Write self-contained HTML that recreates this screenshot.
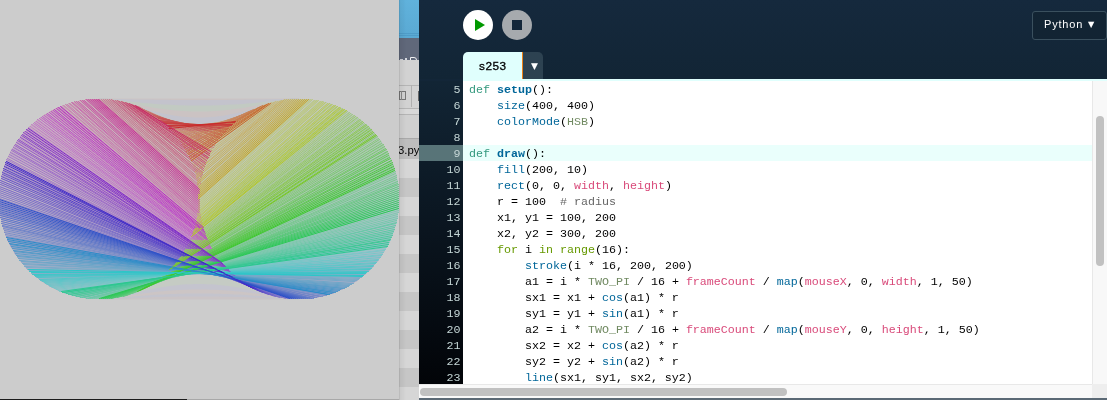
<!DOCTYPE html>
<html><head><meta charset="utf-8"><title>s253</title>
<style>
html,body{margin:0;padding:0;background:#cccccc;}
body{width:1107px;height:400px;overflow:hidden;position:relative;font-family:"Liberation Sans",sans-serif;}
#sk{position:absolute;left:0;top:0;width:399px;height:399px;background:#cccccc;overflow:hidden;}
#sk svg{position:absolute;left:0;top:0;}
#strip{position:absolute;left:399px;top:0;width:20px;height:400px;background:#cfcfcf;overflow:hidden;}
#edge{position:absolute;left:399px;top:0;width:7px;height:400px;background:linear-gradient(to right,rgba(0,0,0,.16),rgba(0,0,0,.05) 18%,rgba(0,0,0,0));}
#ed{position:absolute;left:419px;top:0;width:688px;height:400px;background:#132638;overflow:hidden;}
#hdr{position:absolute;left:0;top:0;width:688px;height:79px;background:linear-gradient(#15293d,#122535);}
.arr{position:absolute;font-family:"DejaVu Sans","Liberation Sans",sans-serif;font-size:9px;line-height:10px;color:#fff;letter-spacing:0;will-change:transform;}
.btn{position:absolute;top:10px;width:30px;height:30px;border-radius:15px;}
#tab{position:absolute;left:44px;top:52px;width:59px;height:28px;background:#e0fffd;border-radius:5px 0 0 0;color:#000;font-size:11.8px;}
#tab span{will-change:transform;position:absolute;left:15.5px;top:6.5px;line-height:14px;letter-spacing:.5px;-webkit-text-stroke:.3px #000;}
#mod{position:absolute;left:103px;top:52px;width:1px;height:27px;background:#ef8115;}
#dd{position:absolute;left:104px;top:52px;width:20px;height:27px;background:#2d4251;border-radius:0 5px 0 0;}
#tl{position:absolute;left:44px;top:79px;width:644px;height:2px;background:#e0fffd;}
#mode{position:absolute;left:613px;top:11px;width:75px;height:29px;border:1px solid #3a505e;border-radius:3px;box-sizing:border-box;color:#fff;font-size:11px;letter-spacing:.8px;background:#122433;}
#mode span{will-change:transform;position:absolute;left:11px;top:4.5px;line-height:14px;white-space:pre;}
#gut{position:absolute;left:0;top:81px;width:44px;height:303px;background:linear-gradient(#122535,#020408);overflow:hidden;}
.txt{position:absolute;left:0;top:0;width:100%;will-change:transform;}
.bgl{position:absolute;left:0;width:100%;height:16px;}
#code{position:absolute;left:44px;top:81px;width:629px;height:303px;background:#fff;overflow:hidden;}
.ln,.cl{height:16px;line-height:18px;font-family:"Liberation Mono",monospace;font-size:11.67px;white-space:pre;}
.ln{color:#c5d6d6;text-align:right;padding-right:2.5px;}

.cl{color:#000;padding-left:6px;}

.k{color:#33997e}.f4{color:#006699;font-weight:bold}.f{color:#006699}.c{color:#718a62}.v{color:#d94a7a}.g{color:#669900}.m{color:#666666}
#vs{position:absolute;left:673px;top:81px;width:15px;height:303px;background:#f8f8f8;border-left:1px solid #e8e8e8;box-sizing:border-box;}
#vt{position:absolute;left:677px;top:116px;width:8px;height:150px;border-radius:4px;background:#c1c1c1;}
#hs{position:absolute;left:0;top:384px;width:673px;height:14px;background:#f9f9f9;border-top:1px solid #e8e8e8;box-sizing:border-box;}
#ht{position:absolute;left:1px;top:388px;width:367px;height:8px;border-radius:4px;background:#c1c1c1;}
#cr{position:absolute;left:673px;top:384px;width:15px;height:14px;background:#eeeeee;}
#bot{position:absolute;left:0;top:398px;width:688px;height:2px;background:#5b6975;}
</style></head><body>
<div id="sk"><svg width="399" height="399" viewBox="0 0 399 399" fill="none" stroke-width="1" stroke-linecap="round">
<path fill="#cbc3c3" stroke="none" d="M99.0 98.5 L103.0 98.5 L107.0 98.5 L111.0 98.5 L115.0 98.5 L119.0 98.5 L123.0 98.5 L127.0 98.5 L131.0 98.5 L135.0 98.5 L139.0 98.5 L143.0 98.5 L147.0 98.5 L151.0 98.5 L155.0 98.5 L159.0 98.5 L163.0 98.5 L167.0 98.5 L171.0 98.5 L175.0 98.5 L179.0 98.5 L183.0 98.5 L187.0 98.5 L191.0 98.5 L195.0 98.5 L199.0 98.5 L203.0 98.5 L207.0 98.5 L211.0 98.5 L215.0 98.5 L219.0 98.5 L223.0 98.5 L227.0 98.5 L231.0 98.5 L235.0 98.5 L239.0 98.5 L243.0 98.5 L247.0 98.5 L251.0 98.5 L255.0 98.5 L259.0 98.5 L263.0 98.5 L267.0 98.5 L271.0 98.5 L275.0 98.5 L279.0 98.5 L283.0 98.5 L287.0 98.5 L291.0 98.5 L295.0 98.5 L299.0 98.5 L299.0 199.0 L99.0 199.0Z"/>
<path fill="#c3c3cc" stroke="none" d="M99.0 98.5 L103.0 98.6 L107.0 98.7 L111.0 98.8 L115.0 98.9 L119.0 99.0 L123.0 99.1 L127.0 99.2 L131.0 99.3 L135.0 99.4 L139.0 99.4 L143.0 99.5 L147.0 99.6 L151.0 99.6 L155.0 99.7 L159.0 99.8 L163.0 99.8 L167.0 99.8 L171.0 99.9 L175.0 99.9 L179.0 99.9 L183.0 100.0 L187.0 100.0 L191.0 100.0 L195.0 100.0 L199.0 100.0 L203.0 100.0 L207.0 100.0 L211.0 100.0 L215.0 100.0 L219.0 99.9 L223.0 99.9 L227.0 99.9 L231.0 99.8 L235.0 99.8 L239.0 99.8 L243.0 99.7 L247.0 99.6 L251.0 99.6 L255.0 99.5 L259.0 99.4 L263.0 99.4 L267.0 99.3 L271.0 99.2 L275.0 99.1 L279.0 99.0 L283.0 98.9 L287.0 98.8 L291.0 98.7 L295.0 98.6 L299.0 98.5 L299.0 199.0 L99.0 199.0Z"/>
<path fill="#c2cac2" stroke="none" d="M99.0 98.5 L103.0 98.6 L107.0 98.8 L111.0 99.2 L115.0 99.8 L119.0 100.3 L123.0 100.8 L127.0 101.2 L131.0 101.7 L135.0 102.1 L139.0 102.5 L143.0 102.9 L147.0 103.3 L151.0 103.6 L155.0 103.9 L159.0 104.2 L163.0 104.4 L167.0 104.6 L171.0 104.8 L175.0 105.0 L179.0 105.2 L183.0 105.3 L187.0 105.4 L191.0 105.4 L195.0 105.5 L199.0 105.5 L203.0 105.5 L207.0 105.4 L211.0 105.4 L215.0 105.3 L219.0 105.2 L223.0 105.0 L227.0 104.8 L231.0 104.6 L235.0 104.4 L239.0 104.2 L243.0 103.9 L247.0 103.6 L251.0 103.3 L255.0 102.9 L259.0 102.5 L263.0 102.1 L267.0 101.7 L271.0 101.2 L275.0 100.8 L279.0 100.3 L283.0 99.8 L287.0 99.2 L291.0 98.8 L295.0 98.6 L299.0 98.5 L299.0 199.0 L99.0 199.0Z"/>
<path fill="#cbc3c3" stroke="none" d="M99.0 98.5 L103.0 98.6 L107.0 98.9 L111.0 99.3 L115.0 99.8 L119.0 100.5 L123.0 101.4 L127.0 102.4 L131.0 103.3 L135.0 104.2 L139.0 105.1 L143.0 105.9 L147.0 106.6 L151.0 107.3 L155.0 108.0 L159.0 108.6 L163.0 109.1 L167.0 109.6 L171.0 110.1 L175.0 110.4 L179.0 110.8 L183.0 111.0 L187.0 111.2 L191.0 111.4 L195.0 111.5 L199.0 111.5 L203.0 111.5 L207.0 111.4 L211.0 111.2 L215.0 111.0 L219.0 110.8 L223.0 110.4 L227.0 110.1 L231.0 109.6 L235.0 109.1 L239.0 108.6 L243.0 108.0 L247.0 107.3 L251.0 106.6 L255.0 105.9 L259.0 105.1 L263.0 104.2 L267.0 103.3 L271.0 102.4 L275.0 101.4 L279.0 100.5 L283.0 99.8 L287.0 99.2 L291.0 98.9 L295.0 98.6 L299.0 98.6 L299.0 199.0 L99.0 199.0Z"/>
<path fill="#c3c3cd" stroke="none" d="M99.0 98.5 L103.0 98.7 L107.0 99.0 L111.0 99.3 L115.0 99.8 L119.0 100.6 L123.0 101.5 L127.0 102.5 L131.0 103.8 L135.0 105.2 L139.0 106.6 L143.0 107.9 L147.0 109.2 L151.0 110.4 L155.0 111.5 L159.0 112.5 L163.0 113.4 L167.0 114.3 L171.0 115.0 L175.0 115.7 L179.0 116.2 L183.0 116.7 L187.0 117.0 L191.0 117.3 L195.0 117.4 L199.0 117.5 L203.0 117.4 L207.0 117.3 L211.0 117.0 L215.0 116.7 L219.0 116.2 L223.0 115.7 L227.0 115.0 L231.0 114.3 L235.0 113.4 L239.0 112.5 L243.0 111.5 L247.0 110.4 L251.0 109.2 L255.0 107.9 L259.0 106.6 L263.0 105.2 L267.0 103.8 L271.0 102.5 L275.0 101.5 L279.0 100.6 L283.0 99.9 L287.0 99.3 L291.0 99.0 L295.0 98.7 L299.0 98.7 L299.0 199.0 L99.0 199.0Z"/>
<path fill="#cac4c6" stroke="none" d="M99.0 299.5 L103.0 299.5 L107.0 299.5 L111.0 299.5 L115.0 299.5 L119.0 299.5 L123.0 299.5 L127.0 299.5 L131.0 299.5 L135.0 299.5 L139.0 299.5 L143.0 299.5 L147.0 299.5 L151.0 299.5 L155.0 299.5 L159.0 299.5 L163.0 299.5 L167.0 299.5 L171.0 299.5 L175.0 299.5 L179.0 299.5 L183.0 299.5 L187.0 299.5 L191.0 299.5 L195.0 299.5 L199.0 299.5 L203.0 299.5 L207.0 299.5 L211.0 299.5 L215.0 299.5 L219.0 299.5 L223.0 299.5 L227.0 299.5 L231.0 299.5 L235.0 299.5 L239.0 299.5 L243.0 299.5 L247.0 299.5 L251.0 299.5 L255.0 299.5 L259.0 299.5 L263.0 299.5 L267.0 299.5 L271.0 299.5 L275.0 299.5 L279.0 299.5 L283.0 299.5 L287.0 299.5 L291.0 299.5 L295.0 299.5 L299.0 299.5 L299.0 199.0 L99.0 199.0Z"/>
<path fill="#c4c4cd" stroke="none" d="M99.0 299.5 L103.0 299.4 L107.0 299.2 L111.0 299.0 L115.0 298.8 L119.0 298.6 L123.0 298.4 L127.0 298.2 L131.0 298.0 L135.0 297.8 L139.0 297.7 L143.0 297.5 L147.0 297.4 L151.0 297.2 L155.0 297.1 L159.0 297.0 L163.0 296.9 L167.0 296.8 L171.0 296.8 L175.0 296.7 L179.0 296.6 L183.0 296.6 L187.0 296.5 L191.0 296.5 L195.0 296.5 L199.0 296.5 L203.0 296.5 L207.0 296.5 L211.0 296.5 L215.0 296.6 L219.0 296.6 L223.0 296.7 L227.0 296.8 L231.0 296.8 L235.0 296.9 L239.0 297.0 L243.0 297.1 L247.0 297.2 L251.0 297.4 L255.0 297.5 L259.0 297.7 L263.0 297.8 L267.0 298.0 L271.0 298.2 L275.0 298.4 L279.0 298.6 L283.0 298.8 L287.0 299.0 L291.0 299.2 L295.0 299.4 L299.0 299.5 L299.0 199.0 L99.0 199.0Z"/>
<path fill="#ccc5c5" stroke="none" d="M99.0 299.5 L103.0 299.4 L107.0 299.2 L111.0 298.8 L115.0 298.3 L119.0 297.9 L123.0 297.5 L127.0 297.1 L131.0 296.7 L135.0 296.3 L139.0 296.0 L143.0 295.7 L147.0 295.4 L151.0 295.1 L155.0 294.8 L159.0 294.6 L163.0 294.4 L167.0 294.2 L171.0 294.0 L175.0 293.9 L179.0 293.8 L183.0 293.7 L187.0 293.6 L191.0 293.5 L195.0 293.5 L199.0 293.5 L203.0 293.5 L207.0 293.5 L211.0 293.6 L215.0 293.7 L219.0 293.8 L223.0 293.9 L227.0 294.0 L231.0 294.2 L235.0 294.4 L239.0 294.6 L243.0 294.8 L247.0 295.1 L251.0 295.4 L255.0 295.7 L259.0 296.0 L263.0 296.3 L267.0 296.7 L271.0 297.1 L275.0 297.5 L279.0 297.9 L283.0 298.3 L287.0 298.8 L291.0 299.2 L295.0 299.4 L299.0 299.5 L299.0 199.0 L99.0 199.0Z"/>
<path fill="#c4c4ce" stroke="none" d="M99.0 299.5 L103.0 299.4 L107.0 299.2 L111.0 298.8 L115.0 298.2 L119.0 297.5 L123.0 296.7 L127.0 296.0 L131.0 295.3 L135.0 294.7 L139.0 294.1 L143.0 293.5 L147.0 293.0 L151.0 292.5 L155.0 292.0 L159.0 291.6 L163.0 291.2 L167.0 290.8 L171.0 290.5 L175.0 290.2 L179.0 290.0 L183.0 289.8 L187.0 289.7 L191.0 289.6 L195.0 289.5 L199.0 289.5 L203.0 289.5 L207.0 289.6 L211.0 289.7 L215.0 289.8 L219.0 290.0 L223.0 290.2 L227.0 290.5 L231.0 290.8 L235.0 291.2 L239.0 291.6 L243.0 292.0 L247.0 292.5 L251.0 293.0 L255.0 293.5 L259.0 294.1 L263.0 294.7 L267.0 295.3 L271.0 296.0 L275.0 296.7 L279.0 297.5 L283.0 298.2 L287.0 298.8 L291.0 299.2 L295.0 299.4 L299.0 299.5 L299.0 199.0 L99.0 199.0Z"/>
<path fill="#c5cbc4" stroke="none" d="M99.0 299.5 L103.0 299.4 L107.0 299.1 L111.0 298.8 L115.0 298.2 L119.0 297.5 L123.0 296.6 L127.0 295.5 L131.0 294.3 L135.0 293.2 L139.0 292.1 L143.0 291.1 L147.0 290.2 L151.0 289.3 L155.0 288.5 L159.0 287.7 L163.0 287.0 L167.0 286.4 L171.0 285.8 L175.0 285.4 L179.0 284.9 L183.0 284.6 L187.0 284.3 L191.0 284.2 L195.0 284.0 L199.0 284.0 L203.0 284.0 L207.0 284.2 L211.0 284.3 L215.0 284.6 L219.0 284.9 L223.0 285.4 L227.0 285.8 L231.0 286.4 L235.0 287.0 L239.0 287.7 L243.0 288.5 L247.0 289.3 L251.0 290.2 L255.0 291.1 L259.0 292.1 L263.0 293.2 L267.0 294.3 L271.0 295.5 L275.0 296.6 L279.0 297.5 L283.0 298.2 L287.0 298.7 L291.0 299.2 L295.0 299.4 L299.0 299.5 L299.0 199.0 L99.0 199.0Z"/>
<g transform="translate(-.5 -.5)">
<path stroke="#c8c0c0" d="M0 204L294 299"/>
<path stroke="#c8c0c0" d="M5 166L256 290"/>
<path stroke="#c8c0c0" d="M26 132L225 266"/>
<path stroke="#c0c8c0" d="M57 109L205 233"/>
<path stroke="#c0c8c0" d="M95 100L200 194"/>
<path stroke="#c0c8c0" d="M133 105L209 156"/>
<path stroke="#c0c8c0" d="M167 126L233 125"/>
<path stroke="#c0c8c0" d="M190 157L266 105"/>
<path stroke="#c0c6c8" d="M199 195L305 100"/>
<path stroke="#c0c0c8" d="M194 233L343 109"/>
<path stroke="#c0c0c8" d="M173 267L374 133"/>
<path stroke="#c0c0c8" d="M142 290L394 166"/>
<path stroke="#c0c0c8" d="M104 299L399 205"/>
<path stroke="#c0c0c8" d="M66 294L390 243"/>
<path stroke="#c8c0c0" d="M32 273L366 274"/>
<path stroke="#c8c0c0" d="M9 242L333 294"/>
<path stroke="#c8c0c0" d="M0 202L292 299"/>
<path stroke="#c8c0c0" d="M6 164L254 289"/>
<path stroke="#c8c0c0" d="M27 131L224 265"/>
<path stroke="#c0c8c0" d="M59 108L204 231"/>
<path stroke="#c0c8c0" d="M97 100L200 192"/>
<path stroke="#c0c8c0" d="M135 106L210 154"/>
<path stroke="#c0c8c0" d="M168 127L234 124"/>
<path stroke="#c0c8c0" d="M191 159L268 104"/>
<path stroke="#c0c6c8" d="M199 197L307 100"/>
<path stroke="#c0c0c8" d="M193 235L345 110"/>
<path stroke="#c0c0c8" d="M172 268L375 134"/>
<path stroke="#c0c0c8" d="M140 291L395 168"/>
<path stroke="#c0c0c8" d="M102 299L399 207"/>
<path stroke="#c0c0c8" d="M64 293L389 245"/>
<path stroke="#c8c0c0" d="M31 272L365 275"/>
<path stroke="#c8c0c0" d="M8 240L331 295"/>
<path stroke="#c8c0c0" d="M0 200L290 299"/>
<path stroke="#c8c0c0" d="M7 162L253 288"/>
<path stroke="#c8c0c0" d="M28 129L222 263"/>
<path stroke="#c0c8c0" d="M61 107L204 229"/>
<path stroke="#c0c8c0" d="M99 100L200 190"/>
<path stroke="#c0c8c0" d="M137 107L211 153"/>
<path stroke="#c0c8c0" d="M170 128L236 122"/>
<path stroke="#c0c8c0" d="M192 161L270 104"/>
<path stroke="#c0c6c8" d="M199 199L309 100"/>
<path stroke="#c0c0c8" d="M192 237L346 111"/>
<path stroke="#c0c0c8" d="M171 270L377 136"/>
<path stroke="#c0c0c8" d="M138 292L395 170"/>
<path stroke="#c0c0c8" d="M100 299L399 209"/>
<path stroke="#c0c0c8" d="M62 292L388 246"/>
<path stroke="#c8c0c0" d="M29 271L363 277"/>
<path stroke="#c8c0c0" d="M7 238L329 295"/>
<path stroke="#c8c0c0" d="M0 198L288 299"/>
<path stroke="#c8c0c0" d="M8 160L251 287"/>
<path stroke="#c8c0c0" d="M30 128L221 262"/>
<path stroke="#c0c8c0" d="M62 107L203 227"/>
<path stroke="#c0c8c0" d="M101 100L200 188"/>
<path stroke="#c0c8c0" d="M139 108L212 151"/>
<path stroke="#c0c8c0" d="M171 130L237 121"/>
<path stroke="#c0c8c0" d="M192 162L272 103"/>
<path stroke="#c0c6c8" d="M199 201L311 100"/>
<path stroke="#c0c0c8" d="M191 239L348 112"/>
<path stroke="#c0c0c8" d="M169 271L378 137"/>
<path stroke="#c0c0c8" d="M137 292L396 172"/>
<path stroke="#c0c0c8" d="M98 299L399 211"/>
<path stroke="#c0c0c8" d="M60 291L387 248"/>
<path stroke="#c8c0c0" d="M28 269L362 278"/>
<path stroke="#c8c0c0" d="M7 237L327 296"/>
<path stroke="#c8c0c0" d="M0 196L286 299"/>
<path stroke="#c8c0c0" d="M8 158L249 286"/>
<path stroke="#c8c0c0" d="M31 127L220 260"/>
<path stroke="#c0c8c0" d="M64 106L203 225"/>
<path stroke="#c0c8c0" d="M103 100L200 186"/>
<path stroke="#c0c8c0" d="M141 108L213 149"/>
<path stroke="#c0c8c0" d="M172 131L239 120"/>
<path stroke="#c0c8c0" d="M193 164L274 103"/>
<path stroke="#c0c6c8" d="M199 203L313 100"/>
<path stroke="#c0c0c8" d="M191 241L350 113"/>
<path stroke="#c0c0c8" d="M168 272L379 139"/>
<path stroke="#c0c0c8" d="M135 293L396 174"/>
<path stroke="#c0c0c8" d="M96 299L399 213"/>
<path stroke="#c0c0c8" d="M58 291L386 250"/>
<path stroke="#c8c0c0" d="M27 268L360 279"/>
<path stroke="#c8c0c0" d="M6 235L325 296"/>
<path stroke="#c8c0c0" d="M0 194L284 298"/>
<path stroke="#c8c0c0" d="M9 156L247 285"/>
<path stroke="#c8c0c0" d="M33 125L219 258"/>
<path stroke="#c0c8c0" d="M66 105L202 223"/>
<path stroke="#c0c8c0" d="M105 100L201 184"/>
<path stroke="#c0c8c0" d="M143 109L214 147"/>
<path stroke="#c0c8c0" d="M174 133L241 119"/>
<path stroke="#c0c8c0" d="M194 166L276 102"/>
<path stroke="#c0c6c8" d="M199 205L315 101"/>
<path stroke="#c0c0c8" d="M190 243L352 114"/>
<path stroke="#c0c0c8" d="M166 274L380 141"/>
<path stroke="#c0c0c8" d="M133 294L397 176"/>
<path stroke="#c0c0c8" d="M94 299L398 215"/>
<path stroke="#c0c0c8" d="M56 290L385 252"/>
<path stroke="#c8c0c0" d="M25 266L358 280"/>
<path stroke="#c8c0c0" d="M5 233L323 297"/>
<path stroke="#c8c0c0" d="M0 192L282 298"/>
<path stroke="#c8c0c0" d="M10 155L246 284"/>
<path stroke="#c8c0c0" d="M34 124L218 257"/>
<path stroke="#c0c8c0" d="M68 105L202 221"/>
<path stroke="#c0c8c0" d="M107 100L201 182"/>
<path stroke="#c0c8c0" d="M144 110L215 146"/>
<path stroke="#c0c8c0" d="M175 134L242 118"/>
<path stroke="#c0c8c0" d="M194 168L278 102"/>
<path stroke="#c0c6c8" d="M199 207L317 101"/>
<path stroke="#c0c0c8" d="M189 244L353 115"/>
<path stroke="#c0c0c8" d="M165 275L381 142"/>
<path stroke="#c0c0c8" d="M131 294L397 178"/>
<path stroke="#c0c0c8" d="M92 299L398 217"/>
<path stroke="#c0c0c8" d="M55 289L384 253"/>
<path stroke="#c8c0c0" d="M24 265L357 281"/>
<path stroke="#c8c0c0" d="M5 231L321 297"/>
<path stroke="#c8c0c0" d="M0 190L280 298"/>
<path stroke="#c8c0c0" d="M11 153L244 283"/>
<path stroke="#c8c0c0" d="M36 123L216 255"/>
<path stroke="#c0c8c0" d="M70 104L201 219"/>
<path stroke="#c0c8c0" d="M109 100L201 180"/>
<path stroke="#c0c8c0" d="M146 111L216 144"/>
<path stroke="#c0c8c0" d="M176 136L244 116"/>
<path stroke="#c0c8c0" d="M195 170L280 101"/>
<path stroke="#c0c6c8" d="M199 209L319 101"/>
<path stroke="#c0c0c8" d="M188 246L355 116"/>
<path stroke="#c0c0c8" d="M163 276L383 144"/>
<path stroke="#c0c0c8" d="M129 295L398 180"/>
<path stroke="#c0c0c8" d="M90 299L398 219"/>
<path stroke="#c0c0c8" d="M53 288L383 255"/>
<path stroke="#c8c0c0" d="M23 263L355 283"/>
<path stroke="#c8c0c0" d="M4 229L319 298"/>
<path stroke="#c8c0c0" d="M0 188L278 297"/>
<path stroke="#c8c0c0" d="M12 151L242 282"/>
<path stroke="#c8c0c0" d="M37 121L215 253"/>
<path stroke="#c0c8c0" d="M72 103L201 217"/>
<path stroke="#c0c8c0" d="M111 100L202 178"/>
<path stroke="#c0c8c0" d="M148 112L217 142"/>
<path stroke="#c0c8c0" d="M178 137L246 115"/>
<path stroke="#c0c8c0" d="M196 172L282 101"/>
<path stroke="#c0c6c8" d="M199 211L321 102"/>
<path stroke="#c0c0c8" d="M187 248L357 117"/>
<path stroke="#c0c0c8" d="M162 278L384 146"/>
<path stroke="#c0c0c8" d="M127 296L398 182"/>
<path stroke="#c0c0c8" d="M88 299L397 221"/>
<path stroke="#c0c0c8" d="M51 287L382 257"/>
<path stroke="#c8c0c0" d="M21 262L353 284"/>
<path stroke="#c8c0c0" d="M3 227L317 298"/>
<path stroke="#c8c0c0" d="M0 186L276 297"/>
<path stroke="#c8c0c0" d="M13 149L241 280"/>
<path stroke="#c8c0c0" d="M39 120L214 252"/>
<path stroke="#c0c8c0" d="M74 103L201 215"/>
<path stroke="#c0c8c0" d="M113 100L202 176"/>
<path stroke="#c0c8c0" d="M150 113L219 141"/>
<path stroke="#c0c8c0" d="M179 139L247 114"/>
<path stroke="#c0c8c0" d="M196 174L284 101"/>
<path stroke="#c0c6c8" d="M199 213L323 102"/>
<path stroke="#c0c0c8" d="M186 250L358 119"/>
<path stroke="#c0c0c8" d="M160 279L385 147"/>
<path stroke="#c0c0c8" d="M125 296L398 184"/>
<path stroke="#c0c0c8" d="M86 299L397 223"/>
<path stroke="#c0c0c8" d="M49 286L380 258"/>
<path stroke="#c8c0c0" d="M20 260L352 285"/>
<path stroke="#c8c0c0" d="M3 225L315 298"/>
<path stroke="#c8c0c0" d="M1 184L274 296"/>
<path stroke="#c8c0c0" d="M14 148L239 279"/>
<path stroke="#c8c0c0" d="M40 119L213 250"/>
<path stroke="#c0c8c0" d="M76 102L200 213"/>
<path stroke="#c0c8c0" d="M115 101L203 174"/>
<path stroke="#c0c8c0" d="M151 114L220 139"/>
<path stroke="#c0c8c0" d="M180 140L249 113"/>
<path stroke="#c0c8c0" d="M197 176L286 100"/>
<path stroke="#c0c6c8" d="M198 215L325 103"/>
<path stroke="#c0c0c8" d="M185 251L360 120"/>
<path stroke="#c0c0c8" d="M159 280L386 149"/>
<path stroke="#c0c0c8" d="M123 297L399 186"/>
<path stroke="#c0c0c8" d="M84 298L396 225"/>
<path stroke="#c0c0c8" d="M48 285L379 260"/>
<path stroke="#c8c0c0" d="M19 259L350 286"/>
<path stroke="#c8c0c0" d="M2 223L313 299"/>
<path stroke="#c8c0c0" d="M1 182L272 296"/>
<path stroke="#c8c0c0" d="M15 146L238 278"/>
<path stroke="#c8c0c0" d="M42 118L212 248"/>
<path stroke="#c0c8c0" d="M78 102L200 211"/>
<path stroke="#c0c8c0" d="M117 101L203 172"/>
<path stroke="#c0c8c0" d="M153 115L221 138"/>
<path stroke="#c0c8c0" d="M181 142L251 112"/>
<path stroke="#c0c8c0" d="M197 178L288 100"/>
<path stroke="#c0c6c8" d="M198 217L327 103"/>
<path stroke="#c0c0c8" d="M184 253L361 121"/>
<path stroke="#c0c0c8" d="M157 281L387 151"/>
<path stroke="#c0c0c8" d="M121 297L399 188"/>
<path stroke="#c0c0c8" d="M82 298L396 227"/>
<path stroke="#c0c0c8" d="M46 284L378 261"/>
<path stroke="#c8c0c0" d="M18 257L348 287"/>
<path stroke="#c8c0c0" d="M2 221L311 299"/>
<path stroke="#c8c0c0" d="M1 180L270 295"/>
<path stroke="#c8c0c0" d="M16 144L236 277"/>
<path stroke="#c8c0c0" d="M44 117L211 247"/>
<path stroke="#c0c8c0" d="M80 101L200 209"/>
<path stroke="#c0c8c0" d="M119 101L204 170"/>
<path stroke="#c0c8c0" d="M155 116L222 136"/>
<path stroke="#c0c8c0" d="M182 144L252 111"/>
<path stroke="#c0c8c0" d="M198 180L290 100"/>
<path stroke="#c0c6c8" d="M198 219L329 104"/>
<path stroke="#c0c0c8" d="M183 255L363 122"/>
<path stroke="#c0c0c8" d="M155 282L388 152"/>
<path stroke="#c0c0c8" d="M119 298L399 190"/>
<path stroke="#c0c0c8" d="M80 298L395 229"/>
<path stroke="#c0c0c8" d="M44 283L377 263"/>
<path stroke="#c8c0c0" d="M17 255L347 288"/>
<path stroke="#c8c0c0" d="M1 219L309 299"/>
<path stroke="#c8c0c0" d="M2 178L268 295"/>
<path stroke="#c8c0c0" d="M17 143L234 275"/>
<path stroke="#c8c0c0" d="M45 115L210 245"/>
<path stroke="#c0c8c0" d="M82 101L200 207"/>
<path stroke="#c0c8c0" d="M121 102L204 168"/>
<path stroke="#c0c8c0" d="M156 117L224 134"/>
<path stroke="#c0c8c0" d="M184 145L254 110"/>
<path stroke="#c0c8c0" d="M198 182L292 100"/>
<path stroke="#c0c6c8" d="M197 221L331 104"/>
<path stroke="#c0c0c8" d="M182 256L365 124"/>
<path stroke="#c0c0c8" d="M154 284L389 154"/>
<path stroke="#c0c0c8" d="M117 298L399 192"/>
<path stroke="#c0c0c8" d="M78 297L395 231"/>
<path stroke="#c0c0c8" d="M43 282L375 265"/>
<path stroke="#c8c0c0" d="M15 254L345 289"/>
<path stroke="#c8c0c0" d="M1 217L307 299"/>
<path stroke="#c8c0c0" d="M2 176L267 294"/>
<path stroke="#c8c0c0" d="M18 141L233 274"/>
<path stroke="#c8c0c0" d="M47 114L209 243"/>
<path stroke="#c0c8c0" d="M84 101L200 205"/>
<path stroke="#c0c8c0" d="M123 102L205 167"/>
<path stroke="#c0c8c0" d="M158 118L225 133"/>
<path stroke="#c0c8c0" d="M185 147L256 109"/>
<path stroke="#c0c8c0" d="M198 184L294 100"/>
<path stroke="#c0c6c8" d="M197 223L332 105"/>
<path stroke="#c0c0c8" d="M181 258L366 125"/>
<path stroke="#c0c0c8" d="M152 285L390 156"/>
<path stroke="#c0c0c8" d="M115 298L399 194"/>
<path stroke="#c0c0c8" d="M76 297L394 232"/>
<path stroke="#c0c0c8" d="M41 281L374 266"/>
<path stroke="#c8c0c0" d="M14 252L343 290"/>
<path stroke="#c8c0c0" d="M1 215L305 299"/>
<path stroke="#c8c0c0" d="M3 174L265 293"/>
<path stroke="#c8c0c0" d="M20 139L231 273"/>
<path stroke="#c8c0c0" d="M49 113L209 241"/>
<path stroke="#c0c8c0" d="M86 100L200 203"/>
<path stroke="#c0c8c0" d="M125 103L206 165"/>
<path stroke="#c0c8c0" d="M160 120L226 131"/>
<path stroke="#c0c8c0" d="M186 149L258 109"/>
<path stroke="#c0c8c0" d="M199 186L296 100"/>
<path stroke="#c0c6c8" d="M196 225L334 106"/>
<path stroke="#c0c0c8" d="M179 260L368 126"/>
<path stroke="#c0c0c8" d="M150 286L390 158"/>
<path stroke="#c0c0c8" d="M113 299L399 196"/>
<path stroke="#c0c0c8" d="M74 296L393 234"/>
<path stroke="#c0c0c8" d="M39 279L373 268"/>
<path stroke="#c8c0c0" d="M13 250L341 290"/>
<path stroke="#c8c0c0" d="M0 213L303 299"/>
<path stroke="#c8c0c0" d="M3 173L263 293"/>
<path stroke="#c8c0c0" d="M21 138L230 271"/>
<path stroke="#c8c0c0" d="M50 112L208 239"/>
<path stroke="#c0c8c0" d="M88 100L200 201"/>
<path stroke="#c0c8c0" d="M126 103L206 163"/>
<path stroke="#c0c8c0" d="M161 121L228 130"/>
<path stroke="#c0c8c0" d="M187 150L260 108"/>
<path stroke="#c0c8c0" d="M199 188L298 100"/>
<path stroke="#c0c6c8" d="M196 226L336 106"/>
<path stroke="#c0c0c8" d="M178 261L369 128"/>
<path stroke="#c0c0c8" d="M149 287L391 160"/>
<path stroke="#c0c0c8" d="M111 299L399 198"/>
<path stroke="#c0c0c8" d="M73 296L393 236"/>
<path stroke="#c0c0c8" d="M38 278L371 269"/>
<path stroke="#c8c0c0" d="M12 249L339 291"/>
<path stroke="#c8c0c0" d="M0 211L301 299"/>
<path stroke="#c8c0c0" d="M4 171L261 292"/>
<path stroke="#c8c0c0" d="M22 136L229 270"/>
<path stroke="#c8c0c0" d="M52 111L207 237"/>
<path stroke="#c0c8c0" d="M90 100L200 199"/>
<path stroke="#c0c8c0" d="M128 104L207 161"/>
<path stroke="#c0c8c0" d="M163 122L229 129"/>
<path stroke="#c0c8c0" d="M188 152L262 107"/>
<path stroke="#c0c8c0" d="M199 190L300 100"/>
<path stroke="#c0c6c8" d="M195 228L338 107"/>
<path stroke="#c0c0c8" d="M177 263L370 129"/>
<path stroke="#c0c0c8" d="M147 288L392 162"/>
<path stroke="#c0c0c8" d="M109 299L399 200"/>
<path stroke="#c0c0c8" d="M71 295L392 238"/>
<path stroke="#c0c0c8" d="M36 277L370 270"/>
<path stroke="#c8c0c0" d="M11 247L337 292"/>
<path stroke="#c8c0c0" d="M0 209L299 299"/>
<path stroke="#c8c0c0" d="M4 169L259 291"/>
<path stroke="#c8c0c0" d="M23 135L227 269"/>
<path stroke="#c8c0c0" d="M54 110L206 236"/>
<path stroke="#c0c8c0" d="M92 100L200 197"/>
<path stroke="#c0c8c0" d="M130 104L208 159"/>
<path stroke="#c0c8c0" d="M164 123L230 127"/>
<path stroke="#c0c8c0" d="M189 154L263 106"/>
<path stroke="#c0c8c0" d="M199 192L302 100"/>
<path stroke="#c0c6c8" d="M195 230L340 108"/>
<path stroke="#c0c0c8" d="M176 264L372 130"/>
<path stroke="#c0c0c8" d="M145 289L393 163"/>
<path stroke="#c0c0c8" d="M107 299L399 202"/>
<path stroke="#c0c0c8" d="M69 295L391 240"/>
<path stroke="#c0c0c8" d="M35 276L369 272"/>
<path stroke="#c8c0c0" d="M10 245L336 293"/>
<path stroke="#c8c0c0" d="M0 207L297 299"/>
<path stroke="#c8c0c0" d="M5 167L257 290"/>
<path stroke="#c8c0c0" d="M25 133L226 267"/>
<path stroke="#c8c0c0" d="M56 110L206 234"/>
<path stroke="#c0c8c0" d="M94 100L200 195"/>
<path stroke="#c0c8c0" d="M132 105L209 157"/>
<path stroke="#c0c8c0" d="M166 125L232 126"/>
<path stroke="#c0c8c0" d="M189 156L265 106"/>
<path stroke="#c0c8c0" d="M199 194L304 100"/>
<path stroke="#c0c6c8" d="M194 232L342 109"/>
<path stroke="#c0c0c8" d="M174 266L373 132"/>
<path stroke="#c0c0c8" d="M143 289L393 165"/>
<path stroke="#c0c0c8" d="M105 299L399 204"/>
<path stroke="#c0c0c8" d="M67 294L390 242"/>
<path stroke="#c0c0c8" d="M33 274L367 273"/>
<path stroke="#c8c0c0" d="M10 243L334 293"/>
<path stroke="#c8c0c0" d="M0 205L295 299"/>
<path stroke="#c8c0c0" d="M6 165L255 289"/>
<path stroke="#c8c0c0" d="M26 132L224 266"/>
<path stroke="#c8c0c0" d="M58 109L205 232"/>
<path stroke="#c0c8c0" d="M96 100L200 193"/>
<path stroke="#c0c8c0" d="M134 106L210 155"/>
<path stroke="#c0c8c0" d="M167 126L233 124"/>
<path stroke="#c0c8c0" d="M190 158L267 105"/>
<path stroke="#c0c8c0" d="M199 196L306 100"/>
<path stroke="#c0c6c8" d="M193 234L344 110"/>
<path stroke="#c0c0c8" d="M173 267L375 133"/>
<path stroke="#c0c0c8" d="M141 290L394 167"/>
<path stroke="#c0c0c8" d="M103 299L399 206"/>
<path stroke="#c0c0c8" d="M65 293L389 244"/>
<path stroke="#c0c0c8" d="M32 273L366 275"/>
<path stroke="#c8c0c0" d="M9 241L332 294"/>
<path stroke="#c8c0c0" d="M0 203L293 299"/>
<path stroke="#c8c0c0" d="M6 163L254 288"/>
<path stroke="#c8c0c0" d="M27 130L223 264"/>
<path stroke="#c8c0c0" d="M59 108L204 230"/>
<path stroke="#c0c8c0" d="M98 100L200 191"/>
<path stroke="#c0c8c0" d="M136 106L211 154"/>
<path stroke="#c0c8c0" d="M169 127L235 123"/>
<path stroke="#c0c8c0" d="M191 159L269 104"/>
<path stroke="#c0c8c0" d="M199 198L308 100"/>
<path stroke="#c0c6c8" d="M193 236L345 111"/>
<path stroke="#c0c0c8" d="M172 269L376 135"/>
<path stroke="#c0c0c8" d="M140 291L395 169"/>
<path stroke="#c0c0c8" d="M101 299L399 208"/>
<path stroke="#c0c0c8" d="M63 293L388 245"/>
<path stroke="#c0c0c8" d="M30 272L364 276"/>
<path stroke="#c8c0c0" d="M8 240L330 295"/>
<path stroke="#c8c0c0" d="M0 201L291 299"/>
<path stroke="#c8c0c0" d="M7 161L252 287"/>
<path stroke="#c8c0c0" d="M29 129L222 263"/>
<path stroke="#c8c0c0" d="M61 107L204 228"/>
<path stroke="#c0c8c0" d="M100 100L200 189"/>
<path stroke="#c0c8c0" d="M138 107L212 152"/>
<path stroke="#c0c8c0" d="M170 129L236 122"/>
<path stroke="#c0c8c0" d="M192 161L271 104"/>
<path stroke="#c0c8c0" d="M199 200L310 100"/>
<path stroke="#c0c6c8" d="M192 238L347 112"/>
<path stroke="#c0c0c8" d="M170 270L377 136"/>
<path stroke="#c0c0c8" d="M138 292L395 171"/>
<path stroke="#c0c0c8" d="M99 299L399 210"/>
<path stroke="#c0c0c8" d="M61 292L387 247"/>
<path stroke="#c0c0c8" d="M29 270L363 277"/>
<path stroke="#c8c0c0" d="M7 238L328 295"/>
<path stroke="#c8c0c0" d="M0 199L289 299"/>
<path stroke="#c8c0c0" d="M8 159L250 286"/>
<path stroke="#c8c0c0" d="M30 127L221 261"/>
<path stroke="#c8c0c0" d="M63 106L203 226"/>
<path stroke="#c0c8c0" d="M102 100L200 187"/>
<path stroke="#c0c8c0" d="M140 108L213 150"/>
<path stroke="#c0c8c0" d="M172 130L238 121"/>
<path stroke="#c0c8c0" d="M193 163L273 103"/>
<path stroke="#c0c8c0" d="M199 202L312 100"/>
<path stroke="#c0c6c8" d="M191 240L349 113"/>
<path stroke="#c0c0c8" d="M169 272L378 138"/>
<path stroke="#c0c0c8" d="M136 293L396 173"/>
<path stroke="#c0c0c8" d="M97 299L399 212"/>
<path stroke="#c0c0c8" d="M59 291L386 249"/>
<path stroke="#c0c0c8" d="M27 269L361 278"/>
<path stroke="#c8c0c0" d="M6 236L326 296"/>
<path stroke="#c8c0c0" d="M0 197L287 299"/>
<path stroke="#c8c0c0" d="M9 158L248 285"/>
<path stroke="#c8c0c0" d="M32 126L219 259"/>
<path stroke="#c8c0c0" d="M65 106L203 224"/>
<path stroke="#c0c8c0" d="M103 100L201 185"/>
<path stroke="#c0c8c0" d="M141 109L214 148"/>
<path stroke="#c0c8c0" d="M173 132L240 119"/>
<path stroke="#c0c8c0" d="M193 165L275 103"/>
<path stroke="#c0c8c0" d="M199 203L314 101"/>
<path stroke="#c0c6c8" d="M190 241L351 114"/>
<path stroke="#c0c0c8" d="M167 273L380 140"/>
<path stroke="#c0c0c8" d="M134 293L396 175"/>
<path stroke="#c0c0c8" d="M96 299L398 214"/>
<path stroke="#c0c0c8" d="M58 290L385 251"/>
<path stroke="#c0c0c8" d="M26 267L359 280"/>
<path stroke="#c8c0c0" d="M6 234L324 296"/>
<path stroke="#c8c0c0" d="M0 196L285 298"/>
<path stroke="#c8c0c0" d="M10 156L247 284"/>
<path stroke="#c8c0c0" d="M33 125L218 258"/>
<path stroke="#c8c0c0" d="M67 105L202 222"/>
<path stroke="#c0c8c0" d="M105 100L201 183"/>
<path stroke="#c0c8c0" d="M143 110L215 147"/>
<path stroke="#c0c8c0" d="M174 133L241 118"/>
<path stroke="#c0c8c0" d="M194 167L277 102"/>
<path stroke="#c0c8c0" d="M199 205L316 101"/>
<path stroke="#c0c6c8" d="M189 243L352 115"/>
<path stroke="#c0c0c8" d="M166 274L381 141"/>
<path stroke="#c0c0c8" d="M132 294L397 177"/>
<path stroke="#c0c0c8" d="M94 299L398 216"/>
<path stroke="#c0c0c8" d="M56 289L384 252"/>
<path stroke="#c0c0c8" d="M25 266L358 281"/>
<path stroke="#c8c0c0" d="M5 232L322 297"/>
<path stroke="#c8c0c0" d="M0 194L283 298"/>
<path stroke="#c8c0c0" d="M10 154L245 283"/>
<path stroke="#c8c0c0" d="M35 123L217 256"/>
<path stroke="#c8c0c0" d="M69 104L202 220"/>
<path stroke="#c0c8c0" d="M107 100L201 181"/>
<path stroke="#c0c8c0" d="M145 110L216 145"/>
<path stroke="#c0c8c0" d="M176 135L243 117"/>
<path stroke="#c0c8c0" d="M195 169L279 102"/>
<path stroke="#c0c8c0" d="M199 207L318 101"/>
<path stroke="#c0c6c8" d="M189 245L354 116"/>
<path stroke="#c0c0c8" d="M164 276L382 143"/>
<path stroke="#c0c0c8" d="M130 295L397 179"/>
<path stroke="#c0c0c8" d="M92 299L398 218"/>
<path stroke="#c0c0c8" d="M54 289L383 254"/>
<path stroke="#c0c0c8" d="M23 264L356 282"/>
<path stroke="#c8c0c0" d="M4 230L320 297"/>
<path stroke="#c8c0c0" d="M0 192L281 298"/>
<path stroke="#c8c0c0" d="M11 152L243 282"/>
<path stroke="#c8c0c0" d="M36 122L216 255"/>
<path stroke="#c8c0c0" d="M71 104L201 218"/>
<path stroke="#c0c8c0" d="M109 100L202 179"/>
<path stroke="#c0c8c0" d="M147 111L217 143"/>
<path stroke="#c0c8c0" d="M177 136L244 116"/>
<path stroke="#c0c8c0" d="M195 171L281 101"/>
<path stroke="#c0c8c0" d="M199 209L320 102"/>
<path stroke="#c0c6c8" d="M188 247L356 117"/>
<path stroke="#c0c0c8" d="M163 277L383 144"/>
<path stroke="#c0c0c8" d="M128 295L398 181"/>
<path stroke="#c0c0c8" d="M90 299L397 220"/>
<path stroke="#c0c0c8" d="M52 288L382 256"/>
<path stroke="#c0c0c8" d="M22 263L355 283"/>
<path stroke="#c8c0c0" d="M4 228L318 298"/>
<path stroke="#c8c0c0" d="M0 190L279 297"/>
<path stroke="#c8c0c0" d="M12 150L242 281"/>
<path stroke="#c8c0c0" d="M38 121L215 253"/>
<path stroke="#c8c0c0" d="M73 103L201 216"/>
<path stroke="#c0c8c0" d="M111 100L202 177"/>
<path stroke="#c0c8c0" d="M149 112L218 142"/>
<path stroke="#c0c8c0" d="M178 138L246 115"/>
<path stroke="#c0c8c0" d="M196 173L283 101"/>
<path stroke="#c0c8c0" d="M199 211L322 102"/>
<path stroke="#c0c6c8" d="M187 249L357 118"/>
<path stroke="#c0c0c8" d="M161 278L384 146"/>
<path stroke="#c0c0c8" d="M126 296L398 183"/>
<path stroke="#c0c0c8" d="M88 299L397 222"/>
<path stroke="#c0c0c8" d="M50 287L381 257"/>
<path stroke="#c0c0c8" d="M21 261L353 284"/>
<path stroke="#c8c0c0" d="M3 226L316 298"/>
<path stroke="#c8c0c0" d="M0 188L277 297"/>
<path stroke="#c8c0c0" d="M13 149L240 280"/>
<path stroke="#c8c0c0" d="M39 120L214 251"/>
<path stroke="#c8c0c0" d="M74 103L201 214"/>
<path stroke="#c0c8c0" d="M113 100L202 175"/>
<path stroke="#c0c8c0" d="M150 113L219 140"/>
<path stroke="#c0c8c0" d="M179 139L248 114"/>
<path stroke="#c0c8c0" d="M196 174L285 101"/>
<path stroke="#c0c8c0" d="M199 213L324 102"/>
<path stroke="#c0c6c8" d="M186 250L359 119"/>
<path stroke="#c0c0c8" d="M160 279L385 148"/>
<path stroke="#c0c0c8" d="M125 296L398 185"/>
<path stroke="#c0c0c8" d="M86 299L397 224"/>
<path stroke="#c0c0c8" d="M49 286L380 259"/>
<path stroke="#c0c0c8" d="M20 260L351 285"/>
<path stroke="#c8c0c0" d="M3 225L314 298"/>
<path stroke="#c8c0c0" d="M0 186L275 297"/>
<path stroke="#c8c0c0" d="M14 147L239 279"/>
<path stroke="#c8c0c0" d="M41 118L213 249"/>
<path stroke="#c8c0c0" d="M76 102L200 212"/>
<path stroke="#c0c8c0" d="M115 101L203 174"/>
<path stroke="#c0c8c0" d="M152 114L220 139"/>
<path stroke="#c0c8c0" d="M181 141L250 113"/>
<path stroke="#c0c8c0" d="M197 176L287 100"/>
<path stroke="#c0c8c0" d="M198 215L325 103"/>
<path stroke="#c0c6c8" d="M185 252L360 120"/>
<path stroke="#c0c0c8" d="M158 281L386 150"/>
<path stroke="#c0c0c8" d="M123 297L399 187"/>
<path stroke="#c0c0c8" d="M84 298L396 225"/>
<path stroke="#c0c0c8" d="M47 285L379 260"/>
<path stroke="#c0c0c8" d="M18 258L349 286"/>
<path stroke="#c8c0c0" d="M2 223L312 299"/>
<path stroke="#c8c0c0" d="M1 184L274 296"/>
<path stroke="#c8c0c0" d="M15 145L237 278"/>
<path stroke="#c8c0c0" d="M43 117L212 248"/>
<path stroke="#c8c0c0" d="M78 102L200 210"/>
<path stroke="#c0c8c0" d="M117 101L203 172"/>
<path stroke="#c0c8c0" d="M154 115L221 137"/>
<path stroke="#c0c8c0" d="M182 143L251 112"/>
<path stroke="#c0c8c0" d="M197 178L289 100"/>
<path stroke="#c0c8c0" d="M198 217L327 103"/>
<path stroke="#c0c6c8" d="M184 254L362 121"/>
<path stroke="#c0c0c8" d="M156 282L387 151"/>
<path stroke="#c0c0c8" d="M121 297L399 189"/>
<path stroke="#c0c0c8" d="M82 298L396 227"/>
<path stroke="#c0c0c8" d="M45 284L378 262"/>
<path stroke="#c0c0c8" d="M17 256L348 287"/>
<path stroke="#c8c0c0" d="M2 221L310 299"/>
<path stroke="#c8c0c0" d="M1 182L272 296"/>
<path stroke="#c8c0c0" d="M17 144L235 276"/>
<path stroke="#c8c0c0" d="M44 116L211 246"/>
<path stroke="#c8c0c0" d="M80 101L200 208"/>
<path stroke="#c0c8c0" d="M119 101L204 170"/>
<path stroke="#c0c8c0" d="M155 117L223 135"/>
<path stroke="#c0c8c0" d="M183 144L253 111"/>
<path stroke="#c0c8c0" d="M198 180L291 100"/>
<path stroke="#c0c8c0" d="M198 219L329 104"/>
<path stroke="#c0c6c8" d="M182 255L364 123"/>
<path stroke="#c0c0c8" d="M155 283L388 153"/>
<path stroke="#c0c0c8" d="M119 298L399 191"/>
<path stroke="#c0c0c8" d="M80 298L395 229"/>
<path stroke="#c0c0c8" d="M44 282L376 264"/>
<path stroke="#c0c0c8" d="M16 255L346 288"/>
<path stroke="#c8c0c0" d="M1 219L308 299"/>
<path stroke="#c8c0c0" d="M1 180L270 295"/>
<path stroke="#c8c0c0" d="M18 142L234 275"/>
<path stroke="#c8c0c0" d="M46 115L210 244"/>
<path stroke="#c8c0c0" d="M82 101L200 206"/>
<path stroke="#c0c8c0" d="M121 102L205 168"/>
<path stroke="#c0c8c0" d="M157 118L224 134"/>
<path stroke="#c0c8c0" d="M184 146L255 110"/>
<path stroke="#c0c8c0" d="M198 182L293 100"/>
<path stroke="#c0c8c0" d="M197 221L331 105"/>
<path stroke="#c0c6c8" d="M181 257L365 124"/>
<path stroke="#c0c0c8" d="M153 284L389 155"/>
<path stroke="#c0c0c8" d="M117 298L399 193"/>
<path stroke="#c0c0c8" d="M78 297L394 231"/>
<path stroke="#c0c0c8" d="M42 281L375 265"/>
<path stroke="#c0c0c8" d="M15 253L344 289"/>
<path stroke="#c8c0c0" d="M1 217L306 299"/>
<path stroke="#c8c0c0" d="M2 178L268 294"/>
<path stroke="#c8c0c0" d="M19 140L232 274"/>
<path stroke="#c8c0c0" d="M48 114L209 242"/>
<path stroke="#c8c0c0" d="M84 101L200 204"/>
<path stroke="#c0c8c0" d="M123 102L205 166"/>
<path stroke="#c0c8c0" d="M159 119L225 132"/>
<path stroke="#c0c8c0" d="M185 148L257 109"/>
<path stroke="#c0c8c0" d="M198 184L295 100"/>
<path stroke="#c0c8c0" d="M197 223L333 105"/>
<path stroke="#c0c6c8" d="M180 259L367 125"/>
<path stroke="#c0c0c8" d="M151 285L390 157"/>
<path stroke="#c0c0c8" d="M115 298L399 195"/>
<path stroke="#c0c0c8" d="M76 297L394 233"/>
<path stroke="#c0c0c8" d="M40 280L374 267"/>
<path stroke="#c0c0c8" d="M14 251L342 290"/>
<path stroke="#c8c0c0" d="M1 215L304 299"/>
<path stroke="#c8c0c0" d="M2 176L266 294"/>
<path stroke="#c8c0c0" d="M20 139L231 272"/>
<path stroke="#c8c0c0" d="M49 113L208 240"/>
<path stroke="#c8c0c0" d="M86 100L200 202"/>
<path stroke="#c0c8c0" d="M125 103L206 164"/>
<path stroke="#c0c8c0" d="M160 120L227 131"/>
<path stroke="#c0c8c0" d="M186 149L259 108"/>
<path stroke="#c0c8c0" d="M199 186L297 100"/>
<path stroke="#c0c8c0" d="M196 225L335 106"/>
<path stroke="#c0c6c8" d="M179 260L368 127"/>
<path stroke="#c0c0c8" d="M150 286L391 159"/>
<path stroke="#c0c0c8" d="M113 299L399 197"/>
<path stroke="#c0c0c8" d="M74 296L393 235"/>
<path stroke="#c0c0c8" d="M39 279L372 268"/>
<path stroke="#c0c0c8" d="M13 250L340 291"/>
<path stroke="#c8c0c0" d="M0 213L302 299"/>
<path stroke="#c8c0c0" d="M3 174L264 293"/>
<path stroke="#c8c0c0" d="M21 137L229 271"/>
<path stroke="#c8c0c0" d="M51 112L207 239"/>
<path stroke="#c8c0c0" d="M88 100L200 200"/>
<path stroke="#c0c8c0" d="M127 103L207 162"/>
<path stroke="#c0c8c0" d="M162 121L228 129"/>
<path stroke="#c0c8c0" d="M187 151L260 107"/>
<path stroke="#c0c8c0" d="M199 188L299 100"/>
<path stroke="#c0c8c0" d="M196 227L337 107"/>
<path stroke="#c0c6c8" d="M178 262L370 128"/>
<path stroke="#c0c0c8" d="M148 287L392 160"/>
<path stroke="#c0c0c8" d="M111 299L399 199"/>
<path stroke="#c0c0c8" d="M72 296L392 237"/>
<path stroke="#c0c0c8" d="M37 278L371 270"/>
<path stroke="#c0c0c8" d="M12 248L339 292"/>
<path stroke="#c8c0c0" d="M0 211L300 299"/>
<path stroke="#c8c0c0" d="M3 172L262 292"/>
<path stroke="#c8c0c0" d="M23 136L228 269"/>
<path stroke="#c8c0c0" d="M53 111L207 237"/>
<path stroke="#c8c0c0" d="M90 100L200 198"/>
<path stroke="#c0c8c0" d="M129 104L208 160"/>
<path stroke="#c0c8c0" d="M163 123L230 128"/>
<path stroke="#c0c8c0" d="M188 153L262 107"/>
<path stroke="#c0c8c0" d="M199 190L301 100"/>
<path stroke="#c0c8c0" d="M195 229L339 108"/>
<path stroke="#c0c6c8" d="M176 263L371 130"/>
<path stroke="#c0c0c8" d="M146 288L392 162"/>
<path stroke="#c0c0c8" d="M109 299L399 201"/>
<path stroke="#c0c0c8" d="M70 295L391 239"/>
<path stroke="#c0c0c8" d="M36 276L369 271"/>
<path stroke="#c0c0c8" d="M11 246L337 292"/>
<path stroke="#c8c0c0" d="M0 209L298 299"/>
<path stroke="#c8c0c0" d="M4 170L260 291"/>
<path stroke="#c8c0c0" d="M24 134L227 268"/>
<path stroke="#c8c0c0" d="M55 110L206 235"/>
<path stroke="#c8c0c0" d="M92 100L200 196"/>
<path stroke="#c0c8c0" d="M131 105L208 158"/>
<path stroke="#c0c8c0" d="M165 124L231 127"/>
<path stroke="#c0c8c0" d="M189 155L264 106"/>
<path stroke="#c0c8c0" d="M199 192L303 100"/>
<path stroke="#c0c8c0" d="M194 231L341 108"/>
<path stroke="#c0c6c8" d="M175 265L372 131"/>
<path stroke="#c0c0c8" d="M144 289L393 164"/>
<path stroke="#c0c0c8" d="M107 299L399 203"/>
<path stroke="#c0c0c8" d="M68 294L391 241"/>
<path stroke="#c0c0c8" d="M34 275L368 272"/>
<path stroke="#c0c0c8" d="M10 244L335 293"/>
<path stroke="#c8c0c0" d="M0 207L296 299"/>
<path stroke="#c8c0c0" d="M5 168L258 291"/>
<path stroke="#c8c0c0" d="M25 133L225 267"/>
<path stroke="#c8c0c0" d="M56 109L205 233"/>
<path stroke="#c8c0c0" d="M94 100L200 194"/>
<path stroke="#c0c8c0" d="M133 105L209 157"/>
<path stroke="#c0c8c0" d="M166 125L232 125"/>
<path stroke="#c0c8c0" d="M190 156L266 105"/>
<path stroke="#c0c8c0" d="M199 194L305 100"/>
<path stroke="#c0c8c0" d="M194 233L342 109"/>
<path stroke="#c0c6c8" d="M174 266L374 132"/>
<path stroke="#c0c0c8" d="M143 290L394 166"/>
<path stroke="#c0c0c8" d="M105 299L399 205"/>
<path stroke="#c0c0c8" d="M66 294L390 242"/>
<path stroke="#c0c0c8" d="M33 274L367 274"/>
<path stroke="#c0c0c8" d="M9 243L333 294"/>
<path stroke="#c8c0c0" d="M0 205L294 299"/>
<path stroke="#c8c0c0" d="M5 166L257 290"/>
<path stroke="#c8c0c0" d="M27 131L224 265"/>
<path stroke="#c8c0c0" d="M58 108L205 231"/>
<path stroke="#c8c0c0" d="M96 100L200 192"/>
<path stroke="#c0c8c0" d="M135 106L210 155"/>
<path stroke="#c0c8c0" d="M168 127L234 124"/>
<path stroke="#c0c8c0" d="M191 158L268 105"/>
<path stroke="#c0c8c0" d="M199 196L307 100"/>
<path stroke="#c0c8c0" d="M193 235L344 110"/>
<path stroke="#c0c6c8" d="M172 268L375 134"/>
<path stroke="#c0c0c8" d="M141 291L394 168"/>
<path stroke="#c0c0c8" d="M103 299L399 207"/>
<path stroke="#c0c0c8" d="M64 293L389 244"/>
<path stroke="#c0c0c8" d="M31 272L365 275"/>
<path stroke="#c0c0c8" d="M8 241L331 294"/>
<path stroke="#c8c0c0" d="M0 203L292 299"/>
<path stroke="#c8c0c0" d="M6 164L255 289"/>
<path stroke="#c8c0c0" d="M28 130L223 264"/>
<path stroke="#c8c0c0" d="M60 108L204 229"/>
<path stroke="#c8c0c0" d="M98 100L200 190"/>
<path stroke="#c0c8c0" d="M137 107L211 153"/>
<path stroke="#c0c8c0" d="M169 128L235 123"/>
<path stroke="#c0c8c0" d="M191 160L270 104"/>
<path stroke="#c0c8c0" d="M199 198L309 100"/>
<path stroke="#c0c8c0" d="M192 237L346 111"/>
<path stroke="#c0c6c8" d="M171 269L376 135"/>
<path stroke="#c0c0c8" d="M139 291L395 170"/>
<path stroke="#c0c0c8" d="M101 299L399 209"/>
<path stroke="#c0c0c8" d="M62 292L388 246"/>
<path stroke="#c0c0c8" d="M30 271L364 276"/>
<path stroke="#c0c0c8" d="M8 239L329 295"/>
<path stroke="#c8c0c0" d="M0 201L290 299"/>
<path stroke="#c8c0c0" d="M7 162L253 288"/>
<path stroke="#c8c0c0" d="M29 128L221 262"/>
<path stroke="#c8c0c0" d="M62 107L203 227"/>
<path stroke="#c8c0c0" d="M100 100L200 188"/>
<path stroke="#c0c8c0" d="M138 107L212 151"/>
<path stroke="#c0c8c0" d="M171 129L237 121"/>
<path stroke="#c0c8c0" d="M192 162L272 103"/>
<path stroke="#c0c8c0" d="M199 200L311 100"/>
<path stroke="#c0c8c0" d="M192 238L348 112"/>
<path stroke="#c0c6c8" d="M170 271L378 137"/>
<path stroke="#c0c0c8" d="M137 292L396 172"/>
<path stroke="#c0c0c8" d="M99 299L399 211"/>
<path stroke="#c0c0c8" d="M61 292L387 248"/>
<path stroke="#c0c0c8" d="M28 270L362 278"/>
<path stroke="#c0c0c8" d="M7 237L327 296"/>
<path stroke="#c8c0c0" d="M0 199L288 299"/>
<path stroke="#c8c0c0" d="M7 161L251 287"/>
<path stroke="#c8c0c0" d="M31 127L220 260"/>
<path stroke="#c8c0c0" d="M64 106L203 225"/>
<path stroke="#c8c0c0" d="M102 100L200 187"/>
<path stroke="#c0c8c0" d="M140 108L213 150"/>
<path stroke="#c0c8c0" d="M172 131L239 120"/>
<path stroke="#c0c8c0" d="M193 164L274 103"/>
<path stroke="#c0c8c0" d="M199 202L312 100"/>
<path stroke="#c0c8c0" d="M191 240L349 113"/>
<path stroke="#c0c6c8" d="M168 272L379 139"/>
<path stroke="#c0c0c8" d="M135 293L396 174"/>
<path stroke="#c0c0c8" d="M97 299L399 212"/>
<path stroke="#c0c0c8" d="M59 291L386 249"/>
<path stroke="#c0c0c8" d="M27 268L360 279"/>
<path stroke="#c0c0c8" d="M6 235L325 296"/>
<path stroke="#c8c0c0" d="M0 197L287 299"/>
<path stroke="#c8c0c0" d="M8 159L250 286"/>
<path stroke="#c8c0c0" d="M32 126L219 259"/>
<path stroke="#c8c0c0" d="M66 105L202 224"/>
<path stroke="#c8c0c0" d="M104 100L201 185"/>
<path stroke="#c0c8c0" d="M142 109L214 148"/>
<path stroke="#c0c8c0" d="M173 132L240 119"/>
<path stroke="#c0c8c0" d="M194 166L275 102"/>
<path stroke="#c0c8c0" d="M199 204L314 101"/>
<path stroke="#c0c8c0" d="M190 242L351 114"/>
<path stroke="#c0c6c8" d="M167 273L380 140"/>
<path stroke="#c0c0c8" d="M133 294L397 175"/>
<path stroke="#c0c0c8" d="M95 299L398 214"/>
<path stroke="#c0c0c8" d="M57 290L385 251"/>
<path stroke="#c0c0c8" d="M26 267L359 280"/>
<path stroke="#c0c0c8" d="M5 233L324 297"/>
<path stroke="#c8c0c0" d="M0 195L285 298"/>
<path stroke="#c8c0c0" d="M9 157L248 285"/>
<path stroke="#c8c0c0" d="M34 124L218 257"/>
<path stroke="#c8c0c0" d="M68 105L202 222"/>
<path stroke="#c8c0c0" d="M106 100L201 183"/>
<path stroke="#c0c8c0" d="M144 110L215 146"/>
<path stroke="#c0c8c0" d="M175 134L242 118"/>
<path stroke="#c0c8c0" d="M194 168L277 102"/>
<path stroke="#c0c8c0" d="M199 206L316 101"/>
<path stroke="#c0c8c0" d="M189 244L353 115"/>
<path stroke="#c0c6c8" d="M165 275L381 142"/>
<path stroke="#c0c0c8" d="M131 294L397 177"/>
<path stroke="#c0c0c8" d="M93 299L398 216"/>
<path stroke="#c0c0c8" d="M55 289L384 253"/>
<path stroke="#c0c0c8" d="M24 265L357 281"/>
<path stroke="#c0c0c8" d="M5 231L322 297"/>
<path stroke="#c8c0c0" d="M0 193L283 298"/>
<path stroke="#c8c0c0" d="M10 155L246 284"/>
<path stroke="#c8c0c0" d="M35 123L217 256"/>
<path stroke="#c8c0c0" d="M69 104L202 220"/>
<path stroke="#c8c0c0" d="M108 100L201 181"/>
<path stroke="#c0c8c0" d="M146 111L216 144"/>
<path stroke="#c0c8c0" d="M176 135L243 117"/>
<path stroke="#c0c8c0" d="M195 169L279 102"/>
<path stroke="#c0c8c0" d="M199 208L318 101"/>
<path stroke="#c0c8c0" d="M188 246L355 116"/>
<path stroke="#c0c6c8" d="M164 276L382 143"/>
<path stroke="#c0c0c8" d="M130 295L397 179"/>
<path stroke="#c0c0c8" d="M91 299L398 218"/>
<path stroke="#c0c0c8" d="M53 288L383 255"/>
<path stroke="#c0c0c8" d="M23 264L356 282"/>
<path stroke="#c0c0c8" d="M4 230L320 297"/>
<path stroke="#c8c0c0" d="M0 191L281 298"/>
<path stroke="#c8c0c0" d="M11 153L244 283"/>
<path stroke="#c8c0c0" d="M37 122L216 254"/>
<path stroke="#c8c0c0" d="M71 104L201 218"/>
<path stroke="#c8c0c0" d="M110 100L202 179"/>
<path stroke="#c0c8c0" d="M147 112L217 143"/>
<path stroke="#c0c8c0" d="M177 137L245 116"/>
<path stroke="#c0c8c0" d="M195 171L281 101"/>
<path stroke="#c0c8c0" d="M199 210L320 102"/>
<path stroke="#c0c8c0" d="M187 247L356 117"/>
<path stroke="#c0c6c8" d="M162 277L383 145"/>
<path stroke="#c0c0c8" d="M128 295L398 181"/>
<path stroke="#c0c0c8" d="M89 299L397 220"/>
<path stroke="#c0c0c8" d="M52 287L382 256"/>
<path stroke="#c0c0c8" d="M22 262L354 283"/>
<path stroke="#c0c0c8" d="M4 228L318 298"/>
<path stroke="#c8c0c0" d="M0 189L279 297"/>
<path stroke="#c8c0c0" d="M12 152L243 282"/>
<path stroke="#c8c0c0" d="M38 120L215 252"/>
<path stroke="#c8c0c0" d="M73 103L201 216"/>
<path stroke="#c8c0c0" d="M112 100L202 177"/>
<path stroke="#c0c8c0" d="M149 113L218 141"/>
<path stroke="#c0c8c0" d="M179 138L247 115"/>
<path stroke="#c0c8c0" d="M196 173L283 101"/>
<path stroke="#c0c8c0" d="M199 212L322 102"/>
<path stroke="#c0c8c0" d="M186 249L358 118"/>
<path stroke="#c0c6c8" d="M161 279L384 147"/>
<path stroke="#c0c0c8" d="M126 296L398 183"/>
<path stroke="#c0c0c8" d="M87 299L397 222"/>
<path stroke="#c0c0c8" d="M50 286L381 258"/>
<path stroke="#c0c0c8" d="M20 261L352 284"/>
<path stroke="#c0c0c8" d="M3 226L316 298"/>
<path stroke="#c8c0c0" d="M0 187L277 297"/>
<path stroke="#c8c0c0" d="M13 150L241 281"/>
<path stroke="#c8c0c0" d="M40 119L213 250"/>
<path stroke="#c8c0c0" d="M75 102L201 214"/>
<path stroke="#c8c0c0" d="M114 101L203 175"/>
<path stroke="#c0c8c0" d="M151 114L219 140"/>
<path stroke="#c0c8c0" d="M180 140L249 113"/>
<path stroke="#c0c8c0" d="M197 175L285 101"/>
<path stroke="#c0c8c0" d="M198 214L324 103"/>
<path stroke="#c0c8c0" d="M185 251L359 119"/>
<path stroke="#c0c6c8" d="M159 280L386 149"/>
<path stroke="#c0c0c8" d="M124 297L398 185"/>
<path stroke="#c0c0c8" d="M85 298L396 224"/>
<path stroke="#c0c0c8" d="M48 285L380 259"/>
<path stroke="#c0c0c8" d="M19 259L350 286"/>
<path stroke="#c0c0c8" d="M2 224L314 298"/>
<path stroke="#c8c0c0" d="M1 185L275 296"/>
<path stroke="#c8c0c0" d="M14 148L240 280"/>
<path stroke="#c8c0c0" d="M42 118L212 249"/>
<path stroke="#c8c0c0" d="M77 102L200 212"/>
<path stroke="#c8c0c0" d="M116 101L203 173"/>
<path stroke="#c0c8c0" d="M153 115L221 138"/>
<path stroke="#c0c8c0" d="M181 142L250 112"/>
<path stroke="#c0c8c0" d="M197 177L287 100"/>
<path stroke="#c0c8c0" d="M198 216L326 103"/>
<path stroke="#c0c8c0" d="M184 253L361 121"/>
<path stroke="#c0c6c8" d="M157 281L387 150"/>
<path stroke="#c0c0c8" d="M122 297L399 187"/>
<path stroke="#c0c0c8" d="M83 298L396 226"/>
<path stroke="#c0c0c8" d="M46 284L378 261"/>
<path stroke="#c0c0c8" d="M18 257L349 287"/>
<path stroke="#c0c0c8" d="M2 222L312 299"/>
<path stroke="#c8c0c0" d="M1 183L273 296"/>
<path stroke="#c8c0c0" d="M15 146L238 278"/>
<path stroke="#c8c0c0" d="M43 117L212 247"/>
<path stroke="#c8c0c0" d="M79 102L200 210"/>
<path stroke="#c8c0c0" d="M118 101L204 171"/>
<path stroke="#c0c8c0" d="M154 116L222 136"/>
<path stroke="#c0c8c0" d="M182 143L252 112"/>
<path stroke="#c0c8c0" d="M197 179L289 100"/>
<path stroke="#c0c8c0" d="M198 218L328 104"/>
<path stroke="#c0c8c0" d="M183 254L363 122"/>
<path stroke="#c0c6c8" d="M156 282L387 152"/>
<path stroke="#c0c0c8" d="M120 297L399 189"/>
<path stroke="#c0c0c8" d="M81 298L395 228"/>
<path stroke="#c0c0c8" d="M45 283L377 263"/>
<path stroke="#c0c0c8" d="M17 256L347 287"/>
<path stroke="#c0c0c8" d="M2 220L310 299"/>
<path stroke="#c8c0c0" d="M1 181L271 295"/>
<path stroke="#c8c0c0" d="M16 145L236 277"/>
<path stroke="#c8c0c0" d="M45 116L211 245"/>
<path stroke="#c8c0c0" d="M81 101L200 208"/>
<path stroke="#c8c0c0" d="M120 102L204 169"/>
<path stroke="#c0c8c0" d="M156 117L223 135"/>
<path stroke="#c0c8c0" d="M183 145L254 111"/>
<path stroke="#c0c8c0" d="M198 181L291 100"/>
<path stroke="#c0c8c0" d="M197 220L330 104"/>
<path stroke="#c0c8c0" d="M182 256L364 123"/>
<path stroke="#c0c6c8" d="M154 283L388 154"/>
<path stroke="#c0c0c8" d="M118 298L399 191"/>
<path stroke="#c0c0c8" d="M79 297L395 230"/>
<path stroke="#c0c0c8" d="M43 282L376 264"/>
<path stroke="#c0c0c8" d="M16 254L345 288"/>
<path stroke="#c0c0c8" d="M1 218L308 299"/>
<path stroke="#c8c0c0" d="M2 179L269 295"/>
<path stroke="#c8c0c0" d="M17 143L235 276"/>
<path stroke="#c8c0c0" d="M47 115L210 243"/>
<path stroke="#c8c0c0" d="M83 101L200 206"/>
<path stroke="#c8c0c0" d="M122 102L205 167"/>
<path stroke="#c0c8c0" d="M158 118L225 133"/>
<path stroke="#c0c8c0" d="M184 147L256 110"/>
<path stroke="#c0c8c0" d="M198 183L293 100"/>
<path stroke="#c0c8c0" d="M197 222L332 105"/>
<path stroke="#c0c8c0" d="M181 258L366 125"/>
<path stroke="#c0c6c8" d="M152 284L389 156"/>
<path stroke="#c0c0c8" d="M116 298L399 193"/>
<path stroke="#c0c0c8" d="M77 297L394 232"/>
<path stroke="#c0c0c8" d="M41 281L374 266"/>
<path stroke="#c0c0c8" d="M15 252L343 289"/>
<path stroke="#c0c0c8" d="M1 216L306 299"/>
<path stroke="#c8c0c0" d="M2 177L267 294"/>
<path stroke="#c8c0c0" d="M18 141L233 274"/>
<path stroke="#c8c0c0" d="M48 114L209 242"/>
<path stroke="#c8c0c0" d="M85 101L200 204"/>
<path stroke="#c8c0c0" d="M124 103L206 165"/>
<path stroke="#c0c8c0" d="M159 119L226 132"/>
<path stroke="#c0c8c0" d="M185 148L257 109"/>
<path stroke="#c0c8c0" d="M198 185L295 100"/>
<path stroke="#c0c8c0" d="M196 224L334 106"/>
<path stroke="#c0c8c0" d="M180 259L367 126"/>
<path stroke="#c0c6c8" d="M151 285L390 157"/>
<path stroke="#c0c0c8" d="M114 298L399 195"/>
<path stroke="#c0c0c8" d="M75 296L393 234"/>
<path stroke="#c0c0c8" d="M40 280L373 267"/>
<path stroke="#c0c0c8" d="M14 251L342 290"/>
<path stroke="#c0c0c8" d="M1 214L304 299"/>
<path stroke="#c8c0c0" d="M3 175L265 293"/>
<path stroke="#c8c0c0" d="M19 140L232 273"/>
<path stroke="#c8c0c0" d="M50 113L208 240"/>
<path stroke="#c8c0c0" d="M87 100L200 202"/>
<path stroke="#c8c0c0" d="M126 103L206 163"/>
<path stroke="#c0c8c0" d="M161 121L227 130"/>
<path stroke="#c0c8c0" d="M186 150L259 108"/>
<path stroke="#c0c8c0" d="M199 187L297 100"/>
<path stroke="#c0c8c0" d="M196 226L336 106"/>
<path stroke="#c0c8c0" d="M178 261L369 127"/>
<path stroke="#c0c6c8" d="M149 286L391 159"/>
<path stroke="#c0c0c8" d="M112 299L399 197"/>
<path stroke="#c0c0c8" d="M73 296L393 236"/>
<path stroke="#c0c0c8" d="M38 278L372 269"/>
<path stroke="#c0c0c8" d="M13 249L340 291"/>
<path stroke="#c0c0c8" d="M0 212L302 299"/>
<path stroke="#c8c0c0" d="M3 173L263 293"/>
<path stroke="#c8c0c0" d="M21 138L230 272"/>
<path stroke="#c8c0c0" d="M52 112L207 238"/>
<path stroke="#c8c0c0" d="M89 100L200 200"/>
<path stroke="#c8c0c0" d="M128 104L207 161"/>
<path stroke="#c0c8c0" d="M162 122L229 129"/>
<path stroke="#c0c8c0" d="M187 152L261 107"/>
<path stroke="#c0c8c0" d="M199 189L299 100"/>
<path stroke="#c0c8c0" d="M195 228L338 107"/>
<path stroke="#c0c8c0" d="M177 262L370 129"/>
<path stroke="#c0c6c8" d="M147 287L392 161"/>
<path stroke="#c0c0c8" d="M110 299L399 199"/>
<path stroke="#c0c0c8" d="M71 295L392 238"/>
<path stroke="#c0c0c8" d="M37 277L370 270"/>
<path stroke="#c0c0c8" d="M12 247L338 292"/>
<path stroke="#c0c0c8" d="M0 210L300 299"/>
<path stroke="#c8c0c0" d="M4 171L261 292"/>
<path stroke="#c8c0c0" d="M22 137L229 270"/>
<path stroke="#c8c0c0" d="M53 111L206 236"/>
<path stroke="#c8c0c0" d="M91 100L200 198"/>
<path stroke="#c8c0c0" d="M130 104L208 160"/>
<path stroke="#c0c8c0" d="M164 123L230 128"/>
<path stroke="#c0c8c0" d="M188 153L263 106"/>
<path stroke="#c0c8c0" d="M199 191L301 100"/>
<path stroke="#c0c8c0" d="M195 230L339 108"/>
<path stroke="#c0c8c0" d="M176 264L371 130"/>
<path stroke="#c0c6c8" d="M146 288L393 163"/>
<path stroke="#c0c0c8" d="M108 299L399 201"/>
<path stroke="#c0c0c8" d="M69 295L391 239"/>
<path stroke="#c0c0c8" d="M35 276L369 271"/>
<path stroke="#c0c0c8" d="M11 246L336 293"/>
<path stroke="#c0c0c8" d="M0 208L298 299"/>
<path stroke="#c8c0c0" d="M4 169L260 291"/>
<path stroke="#c8c0c0" d="M23 135L228 269"/>
<path stroke="#c8c0c0" d="M55 110L206 234"/>
<path stroke="#c8c0c0" d="M93 100L200 196"/>
<path stroke="#c8c0c0" d="M132 105L209 158"/>
<path stroke="#c0c8c0" d="M165 124L231 126"/>
<path stroke="#c0c8c0" d="M189 155L265 106"/>
<path stroke="#c0c8c0" d="M199 193L303 100"/>
<path stroke="#c0c8c0" d="M194 232L341 109"/>
<path stroke="#c0c8c0" d="M175 265L373 131"/>
<path stroke="#c0c6c8" d="M144 289L393 165"/>
<path stroke="#c0c0c8" d="M106 299L399 203"/>
<path stroke="#c0c0c8" d="M67 294L390 241"/>
<path stroke="#c0c0c8" d="M34 275L368 273"/>
<path stroke="#c0c0c8" d="M10 244L334 293"/>
<path stroke="#c0c0c8" d="M0 206L296 299"/>
<path stroke="#c8c0c0" d="M5 167L258 290"/>
<path stroke="#c8c0c0" d="M24 134L226 268"/>
<path stroke="#c8c0c0" d="M57 109L205 232"/>
<path stroke="#c8c0c0" d="M95 100L200 194"/>
<path stroke="#c8c0c0" d="M134 105L209 156"/>
<path stroke="#c0c8c0" d="M167 126L233 125"/>
<path stroke="#c0c8c0" d="M190 157L267 105"/>
<path stroke="#c0c8c0" d="M199 195L305 100"/>
<path stroke="#c0c8c0" d="M194 234L343 109"/>
<path stroke="#c0c8c0" d="M173 267L374 133"/>
<path stroke="#c0c6c8" d="M142 290L394 167"/>
<path stroke="#c0c0c8" d="M104 299L399 205"/>
<path stroke="#c0c0c8" d="M65 294L390 243"/>
<path stroke="#c0c0c8" d="M32 273L366 274"/>
<path stroke="#c0c0c8" d="M9 242L332 294"/>
<path stroke="#c0c0c8" d="M0 204L294 299"/>
<path stroke="#c8c0c0" d="M5 165L256 290"/>
<path stroke="#c8c0c0" d="M26 132L225 266"/>
<path stroke="#c8bfbf" d="M59 108L204 230"/>
<path stroke="#c8c0bf" d="M97 100L200 192"/>
<path stroke="#c8c0bf" d="M135 106L210 154"/>
<path stroke="#c0c8bf" d="M168 127L234 124"/>
<path stroke="#c0c8bf" d="M191 159L269 104"/>
<path stroke="#c0c8bf" d="M199 197L307 100"/>
<path stroke="#bfc8c0" d="M193 235L345 110"/>
<path stroke="#bfc8c0" d="M172 268L375 134"/>
<path stroke="#bfc6c8" d="M140 291L395 169"/>
<path stroke="#bfc0c8" d="M102 299L399 207"/>
<path stroke="#bfc0c8" d="M64 293L389 245"/>
<path stroke="#c0bfc8" d="M31 272L365 275"/>
<path stroke="#c0bfc8" d="M8 240L330 295"/>
<path stroke="#c0bfc8" d="M0 202L292 299"/>
<path stroke="#c8bfc0" d="M6 164L254 289"/>
<path stroke="#c8bfc0" d="M27 131L224 265"/>
<path stroke="#c8bebe" d="M61 107L204 229"/>
<path stroke="#c8c0be" d="M99 100L200 190"/>
<path stroke="#c8c0be" d="M137 107L211 152"/>
<path stroke="#c0c8be" d="M170 128L236 122"/>
<path stroke="#c0c8be" d="M192 161L270 104"/>
<path stroke="#c0c8be" d="M199 199L309 100"/>
<path stroke="#bec8c0" d="M192 237L347 111"/>
<path stroke="#bec8c0" d="M171 270L377 136"/>
<path stroke="#bec6c8" d="M138 292L395 170"/>
<path stroke="#bec0c8" d="M100 299L399 209"/>
<path stroke="#bec0c8" d="M62 292L388 247"/>
<path stroke="#c0bec8" d="M29 271L363 277"/>
<path stroke="#c0bec8" d="M7 238L329 295"/>
<path stroke="#c0bec8" d="M0 200L290 299"/>
<path stroke="#c8bec0" d="M7 162L252 288"/>
<path stroke="#c8bec0" d="M28 129L222 263"/>
<path stroke="#c8bdbd" d="M63 107L203 227"/>
<path stroke="#c8c0bd" d="M101 100L200 188"/>
<path stroke="#c8c0bd" d="M139 108L212 151"/>
<path stroke="#c0c8bd" d="M171 130L238 121"/>
<path stroke="#c0c8bd" d="M192 163L272 103"/>
<path stroke="#c0c8bd" d="M199 201L311 100"/>
<path stroke="#bdc8c0" d="M191 239L348 112"/>
<path stroke="#bdc8c0" d="M169 271L378 138"/>
<path stroke="#bdc6c8" d="M136 292L396 172"/>
<path stroke="#bdc0c8" d="M98 299L399 211"/>
<path stroke="#bdc0c8" d="M60 291L387 248"/>
<path stroke="#c0bdc8" d="M28 269L361 278"/>
<path stroke="#c0bdc8" d="M7 236L327 296"/>
<path stroke="#c0bdc8" d="M0 198L288 299"/>
<path stroke="#c8bdc0" d="M8 160L251 287"/>
<path stroke="#c8bdc0" d="M30 128L221 261"/>
<path stroke="#c8bcbc" d="M64 106L203 225"/>
<path stroke="#c8c0bc" d="M103 100L200 186"/>
<path stroke="#c8c0bc" d="M141 108L213 149"/>
<path stroke="#c0c8bc" d="M173 131L239 120"/>
<path stroke="#c0c8bc" d="M193 164L274 103"/>
<path stroke="#bfc8bc" d="M199 203L313 100"/>
<path stroke="#bcc8c0" d="M191 241L350 113"/>
<path stroke="#bcc8c0" d="M168 273L379 139"/>
<path stroke="#bcc6c8" d="M135 293L396 174"/>
<path stroke="#bcc0c8" d="M96 299L399 213"/>
<path stroke="#bcc0c8" d="M58 291L386 250"/>
<path stroke="#bfbcc8" d="M26 268L360 279"/>
<path stroke="#c0bcc8" d="M6 235L325 296"/>
<path stroke="#c0bcc8" d="M0 196L286 299"/>
<path stroke="#c8bcc0" d="M8 158L249 286"/>
<path stroke="#c8bcc0" d="M31 126L220 260"/>
<path stroke="#c8bbbb" d="M66 105L202 223"/>
<path stroke="#c8c0bb" d="M105 100L201 184"/>
<path stroke="#c8c0bb" d="M143 109L214 147"/>
<path stroke="#c0c8bb" d="M174 133L241 119"/>
<path stroke="#c0c8bb" d="M194 166L276 102"/>
<path stroke="#bec8bb" d="M199 205L315 101"/>
<path stroke="#bbc8c0" d="M190 243L352 114"/>
<path stroke="#bbc8c0" d="M166 274L380 141"/>
<path stroke="#bbc6c8" d="M133 294L397 176"/>
<path stroke="#bbc0c8" d="M94 299L398 215"/>
<path stroke="#bbc0c8" d="M56 290L385 252"/>
<path stroke="#bebbc8" d="M25 266L358 280"/>
<path stroke="#c0bbc8" d="M5 233L323 297"/>
<path stroke="#c0bbc8" d="M0 194L284 298"/>
<path stroke="#c8bbc0" d="M9 156L247 285"/>
<path stroke="#c8bbc0" d="M33 125L219 258"/>
<path stroke="#c8baba" d="M68 105L202 221"/>
<path stroke="#c8c0ba" d="M107 100L201 182"/>
<path stroke="#c8c0ba" d="M145 110L215 146"/>
<path stroke="#c0c8ba" d="M175 134L242 117"/>
<path stroke="#c0c8ba" d="M194 168L278 102"/>
<path stroke="#bdc8ba" d="M199 207L317 101"/>
<path stroke="#bac8c0" d="M189 245L353 115"/>
<path stroke="#bac8c0" d="M165 275L382 142"/>
<path stroke="#bac6c8" d="M131 294L397 178"/>
<path stroke="#bac0c8" d="M92 299L398 217"/>
<path stroke="#bac0c8" d="M54 289L384 253"/>
<path stroke="#bdbac8" d="M24 265L357 282"/>
<path stroke="#c0bac8" d="M5 231L321 297"/>
<path stroke="#c0bac8" d="M0 192L282 298"/>
<path stroke="#c8bac0" d="M10 154L246 284"/>
<path stroke="#c8bac0" d="M34 124L217 257"/>
<path stroke="#c8b9b9" d="M70 104L201 219"/>
<path stroke="#c8c0b9" d="M109 100L201 180"/>
<path stroke="#c8c0b9" d="M146 111L216 144"/>
<path stroke="#c0c8b9" d="M177 136L244 116"/>
<path stroke="#c0c8b9" d="M195 170L280 101"/>
<path stroke="#bcc8b9" d="M199 209L319 101"/>
<path stroke="#b9c8c0" d="M188 246L355 116"/>
<path stroke="#b9c8c0" d="M163 277L383 144"/>
<path stroke="#b9c6c8" d="M129 295L398 180"/>
<path stroke="#b9c0c8" d="M90 299L398 219"/>
<path stroke="#b9bfc8" d="M53 288L383 255"/>
<path stroke="#bcb9c8" d="M22 263L355 283"/>
<path stroke="#c0b9c8" d="M4 229L319 298"/>
<path stroke="#c0b9c8" d="M0 190L280 298"/>
<path stroke="#c8b9c0" d="M11 153L244 283"/>
<path stroke="#c8b9c0" d="M36 122L216 255"/>
<path stroke="#c8b8b8" d="M72 103L201 217"/>
<path stroke="#c8c0b8" d="M111 100L202 178"/>
<path stroke="#c8c0b8" d="M148 112L218 142"/>
<path stroke="#c0c8b8" d="M178 137L246 115"/>
<path stroke="#c0c8b8" d="M196 172L282 101"/>
<path stroke="#bbc8b8" d="M199 211L321 102"/>
<path stroke="#b8c8bf" d="M187 248L357 118"/>
<path stroke="#b8c8c0" d="M162 278L384 146"/>
<path stroke="#b8c6c8" d="M127 296L398 182"/>
<path stroke="#b8c0c8" d="M88 299L397 221"/>
<path stroke="#b8bec8" d="M51 287L381 257"/>
<path stroke="#bbb8c8" d="M21 262L353 284"/>
<path stroke="#c0b8c8" d="M3 227L317 298"/>
<path stroke="#c0b8c8" d="M0 188L278 297"/>
<path stroke="#c8b8c0" d="M12 151L242 281"/>
<path stroke="#c8b8c0" d="M37 121L215 253"/>
<path stroke="#c8b7b7" d="M74 103L201 215"/>
<path stroke="#c8c0b7" d="M113 100L202 176"/>
<path stroke="#c8c0b7" d="M150 113L219 141"/>
<path stroke="#c0c8b7" d="M179 139L247 114"/>
<path stroke="#c0c8b7" d="M196 174L284 101"/>
<path stroke="#bac8b7" d="M199 213L323 102"/>
<path stroke="#b7c8be" d="M186 250L358 119"/>
<path stroke="#b7c8c0" d="M160 279L385 147"/>
<path stroke="#b7c6c8" d="M125 296L398 184"/>
<path stroke="#b7c0c8" d="M86 299L397 223"/>
<path stroke="#b7bdc8" d="M49 286L380 258"/>
<path stroke="#bab7c8" d="M20 260L352 285"/>
<path stroke="#c0b7c8" d="M3 225L315 298"/>
<path stroke="#c0b7c8" d="M0 186L276 297"/>
<path stroke="#c8b7c0" d="M13 149L241 280"/>
<path stroke="#c8b7c0" d="M39 120L214 252"/>
<path stroke="#c8b6b6" d="M76 102L200 213"/>
<path stroke="#c8c0b6" d="M115 101L203 174"/>
<path stroke="#c8c0b6" d="M152 114L220 139"/>
<path stroke="#c0c8b6" d="M180 141L249 113"/>
<path stroke="#c0c8b6" d="M197 176L286 100"/>
<path stroke="#b9c8b6" d="M198 215L325 103"/>
<path stroke="#b6c8bd" d="M185 252L360 120"/>
<path stroke="#b6c8c0" d="M158 280L386 149"/>
<path stroke="#b6c6c8" d="M123 297L399 186"/>
<path stroke="#b6c0c8" d="M84 298L396 225"/>
<path stroke="#b6bcc8" d="M47 285L379 260"/>
<path stroke="#b9b6c8" d="M19 258L350 286"/>
<path stroke="#c0b6c8" d="M2 223L313 299"/>
<path stroke="#c0b6c8" d="M1 184L274 296"/>
<path stroke="#c8b6c0" d="M14 147L239 279"/>
<path stroke="#c8b6c0" d="M41 119L213 250"/>
<path stroke="#c8b5b5" d="M78 102L200 211"/>
<path stroke="#c8c0b5" d="M117 101L203 172"/>
<path stroke="#c8c0b5" d="M153 115L221 137"/>
<path stroke="#c0c8b5" d="M181 142L251 112"/>
<path stroke="#c0c8b5" d="M197 178L288 100"/>
<path stroke="#b8c8b5" d="M198 217L327 103"/>
<path stroke="#b5c8bc" d="M184 253L362 121"/>
<path stroke="#b5c8c0" d="M157 281L387 151"/>
<path stroke="#b5c6c8" d="M121 297L399 188"/>
<path stroke="#b5c0c8" d="M82 298L396 227"/>
<path stroke="#b5bbc8" d="M46 284L378 262"/>
<path stroke="#b8b5c8" d="M18 257L348 287"/>
<path stroke="#c0b5c8" d="M2 221L311 299"/>
<path stroke="#c0b5c8" d="M1 182L272 296"/>
<path stroke="#c8b5c0" d="M15 146L237 278"/>
<path stroke="#c8b5bf" d="M42 118L212 248"/>
<path stroke="#c8b4b4" d="M80 101L200 209"/>
<path stroke="#c8bfb4" d="M119 101L204 170"/>
<path stroke="#c8c0b4" d="M155 116L222 136"/>
<path stroke="#c0c8b4" d="M183 144L253 111"/>
<path stroke="#c0c8b4" d="M198 180L290 100"/>
<path stroke="#b7c8b4" d="M198 219L329 104"/>
<path stroke="#b4c8bb" d="M183 255L363 122"/>
<path stroke="#b4c8c0" d="M155 283L388 153"/>
<path stroke="#b4c6c8" d="M119 298L399 190"/>
<path stroke="#b4c0c8" d="M80 298L395 229"/>
<path stroke="#b4bac8" d="M44 283L377 263"/>
<path stroke="#b7b4c8" d="M16 255L346 288"/>
<path stroke="#c0b4c8" d="M1 219L309 299"/>
<path stroke="#c0b4c8" d="M1 180L270 295"/>
<path stroke="#c8b4c0" d="M16 144L236 277"/>
<path stroke="#c8b4be" d="M44 116L211 246"/>
<path stroke="#c8b3b3" d="M82 101L200 207"/>
<path stroke="#c8beb3" d="M121 102L205 168"/>
<path stroke="#c8c0b3" d="M157 117L224 134"/>
<path stroke="#c0c8b3" d="M184 145L254 110"/>
<path stroke="#c0c8b3" d="M198 182L292 100"/>
<path stroke="#b6c8b3" d="M197 221L331 105"/>
<path stroke="#b3c8ba" d="M182 257L365 124"/>
<path stroke="#b3c8c0" d="M154 284L389 154"/>
<path stroke="#b3c6c8" d="M117 298L399 192"/>
<path stroke="#b3c0c8" d="M78 297L394 231"/>
<path stroke="#b3b9c8" d="M42 282L375 265"/>
<path stroke="#b6b3c8" d="M15 254L345 289"/>
<path stroke="#c0b3c8" d="M1 217L307 299"/>
<path stroke="#c0b3c8" d="M2 178L268 294"/>
<path stroke="#c8b3c0" d="M17 142L234 275"/>
<path stroke="#c8b3bd" d="M45 115L210 245"/>
<path stroke="#c8b2b2" d="M84 101L200 205"/>
<path stroke="#c8bdb2" d="M123 102L205 166"/>
<path stroke="#c8c0b2" d="M158 119L225 133"/>
<path stroke="#c0c8b2" d="M185 147L256 109"/>
<path stroke="#c0c8b2" d="M198 184L294 100"/>
<path stroke="#b5c8b2" d="M197 223L333 105"/>
<path stroke="#b2c8b9" d="M180 258L366 125"/>
<path stroke="#b2c8c0" d="M152 285L390 156"/>
<path stroke="#b2c6c8" d="M115 298L399 194"/>
<path stroke="#b2c0c8" d="M76 297L394 233"/>
<path stroke="#b2b8c8" d="M41 280L374 266"/>
<path stroke="#b5b2c8" d="M14 252L343 290"/>
<path stroke="#c0b2c8" d="M1 215L305 299"/>
<path stroke="#c0b2c8" d="M2 176L266 294"/>
<path stroke="#c8b2c0" d="M19 141L233 274"/>
<path stroke="#c8b2bc" d="M47 114L209 243"/>
<path stroke="#c8b1b1" d="M86 100L200 203"/>
<path stroke="#c8bcb1" d="M125 103L206 164"/>
<path stroke="#c8c0b1" d="M160 120L226 131"/>
<path stroke="#c0c8b1" d="M186 149L258 109"/>
<path stroke="#c0c8b1" d="M199 186L296 100"/>
<path stroke="#b4c8b1" d="M196 225L335 106"/>
<path stroke="#b1c8b8" d="M179 260L368 126"/>
<path stroke="#b1c8c0" d="M150 286L390 158"/>
<path stroke="#b1c6c8" d="M113 299L399 196"/>
<path stroke="#b1c0c8" d="M74 296L393 235"/>
<path stroke="#b1b7c8" d="M39 279L373 268"/>
<path stroke="#b4b1c8" d="M13 250L341 290"/>
<path stroke="#c0b1c8" d="M0 213L303 299"/>
<path stroke="#c0b1c8" d="M3 174L264 293"/>
<path stroke="#c8b1c0" d="M20 139L231 273"/>
<path stroke="#c8b1bb" d="M49 113L209 241"/>
<path stroke="#c8b0b0" d="M88 100L200 201"/>
<path stroke="#c8bbb0" d="M127 103L207 163"/>
<path stroke="#c8c0b0" d="M161 121L228 130"/>
<path stroke="#c0c8b0" d="M187 151L260 108"/>
<path stroke="#c0c8b0" d="M199 188L298 100"/>
<path stroke="#b3c8b0" d="M196 227L336 107"/>
<path stroke="#b0c8b7" d="M178 261L369 128"/>
<path stroke="#b0c8c0" d="M148 287L391 160"/>
<path stroke="#b0c6c8" d="M111 299L399 198"/>
<path stroke="#b0c0c8" d="M72 296L392 236"/>
<path stroke="#b0b6c8" d="M38 278L371 269"/>
<path stroke="#b3b0c8" d="M12 248L339 291"/>
<path stroke="#c0b0c8" d="M0 211L301 299"/>
<path stroke="#c0b0c8" d="M3 172L263 292"/>
<path stroke="#c8b0c0" d="M21 138L230 271"/>
<path stroke="#c8b0ba" d="M51 112L208 239"/>
<path stroke="#c8afaf" d="M90 100L200 199"/>
<path stroke="#c8baaf" d="M129 104L207 161"/>
<path stroke="#c8c0af" d="M163 122L229 128"/>
<path stroke="#c0c8af" d="M188 152L262 107"/>
<path stroke="#bfc8af" d="M199 190L300 100"/>
<path stroke="#b2c8af" d="M195 229L338 107"/>
<path stroke="#afc8b6" d="M177 263L371 129"/>
<path stroke="#afc8c0" d="M147 288L392 162"/>
<path stroke="#afc6c8" d="M109 299L399 200"/>
<path stroke="#afc0c8" d="M70 295L392 238"/>
<path stroke="#afb5c8" d="M36 277L370 271"/>
<path stroke="#b2afc8" d="M11 247L337 292"/>
<path stroke="#c0afc8" d="M0 209L299 299"/>
<path stroke="#c0afc8" d="M4 170L261 292"/>
<path stroke="#c8afc0" d="M22 136L228 270"/>
<path stroke="#c8afb9" d="M52 111L207 237"/>
<path stroke="#c8aeae" d="M92 100L200 197"/>
<path stroke="#c8b9ae" d="M130 104L208 159"/>
<path stroke="#c8c0ae" d="M164 123L231 127"/>
<path stroke="#c0c8ae" d="M189 154L264 106"/>
<path stroke="#bec8ae" d="M199 192L302 100"/>
<path stroke="#b1c8ae" d="M195 230L340 108"/>
<path stroke="#aec8b5" d="M176 264L372 131"/>
<path stroke="#aec8c0" d="M145 289L393 164"/>
<path stroke="#aec6c8" d="M107 299L399 202"/>
<path stroke="#aec0c8" d="M69 295L391 240"/>
<path stroke="#aeb4c8" d="M35 276L368 272"/>
<path stroke="#b1aec8" d="M10 245L335 293"/>
<path stroke="#bfaec8" d="M0 207L297 299"/>
<path stroke="#c0aec8" d="M4 169L259 291"/>
<path stroke="#c8aec0" d="M23 135L227 268"/>
<path stroke="#c8aeb8" d="M54 110L206 235"/>
<path stroke="#c8adad" d="M94 100L200 195"/>
<path stroke="#c8b8ad" d="M132 105L209 157"/>
<path stroke="#c8c0ad" d="M166 125L232 126"/>
<path stroke="#c0c8ad" d="M190 156L265 105"/>
<path stroke="#bdc8ad" d="M199 194L304 100"/>
<path stroke="#b0c8ad" d="M194 232L342 109"/>
<path stroke="#adc8b4" d="M174 266L373 132"/>
<path stroke="#adc8c0" d="M143 290L394 165"/>
<path stroke="#adc6c8" d="M105 299L399 204"/>
<path stroke="#adc0c8" d="M67 294L390 242"/>
<path stroke="#adb3c8" d="M33 274L367 273"/>
<path stroke="#b0adc8" d="M9 243L334 294"/>
<path stroke="#beadc8" d="M0 205L295 299"/>
<path stroke="#c0adc8" d="M5 167L257 290"/>
<path stroke="#c8adc0" d="M25 133L226 267"/>
<path stroke="#c8adb7" d="M56 109L205 234"/>
<path stroke="#c8acac" d="M96 100L200 193"/>
<path stroke="#c8b7ac" d="M134 106L210 155"/>
<path stroke="#c8c0ac" d="M167 126L234 124"/>
<path stroke="#c0c8ac" d="M190 158L267 105"/>
<path stroke="#bcc8ac" d="M199 196L306 100"/>
<path stroke="#afc8ac" d="M193 234L344 110"/>
<path stroke="#acc8b3" d="M173 267L375 134"/>
<path stroke="#acc8c0" d="M141 290L394 167"/>
<path stroke="#acc6c8" d="M103 299L399 206"/>
<path stroke="#acc0c8" d="M65 293L389 244"/>
<path stroke="#acb2c8" d="M32 273L365 275"/>
<path stroke="#afacc8" d="M9 241L332 294"/>
<path stroke="#bdacc8" d="M0 203L293 299"/>
<path stroke="#c0acc8" d="M6 165L255 289"/>
<path stroke="#c8acc0" d="M26 132L224 265"/>
<path stroke="#c8acb6" d="M58 109L205 232"/>
<path stroke="#c8abab" d="M98 100L200 191"/>
<path stroke="#c8b6ab" d="M136 106L211 154"/>
<path stroke="#c8c0ab" d="M169 128L235 123"/>
<path stroke="#c0c8ab" d="M191 160L269 104"/>
<path stroke="#bbc8ab" d="M199 198L308 100"/>
<path stroke="#aec8ab" d="M193 236L345 111"/>
<path stroke="#abc8b2" d="M171 269L376 135"/>
<path stroke="#abc8c0" d="M139 291L395 169"/>
<path stroke="#abc6c8" d="M101 299L399 208"/>
<path stroke="#abc0c8" d="M63 293L388 245"/>
<path stroke="#abb1c8" d="M30 271L364 276"/>
<path stroke="#aeabc8" d="M8 239L330 295"/>
<path stroke="#bcabc8" d="M0 201L291 299"/>
<path stroke="#c0abc8" d="M6 163L254 288"/>
<path stroke="#c8abc0" d="M28 130L223 264"/>
<path stroke="#c8abb5" d="M60 108L204 230"/>
<path stroke="#c8aaaa" d="M100 100L200 189"/>
<path stroke="#c8b5aa" d="M138 107L212 152"/>
<path stroke="#c8c0aa" d="M170 129L237 122"/>
<path stroke="#c0c8aa" d="M192 161L271 104"/>
<path stroke="#bac8aa" d="M199 200L310 100"/>
<path stroke="#adc8aa" d="M192 238L347 112"/>
<path stroke="#aac8b1" d="M170 270L377 137"/>
<path stroke="#aac8c0" d="M138 292L395 171"/>
<path stroke="#aac6c8" d="M99 299L399 210"/>
<path stroke="#aac0c8" d="M61 292L387 247"/>
<path stroke="#aab0c8" d="M29 270L362 277"/>
<path stroke="#adaac8" d="M7 238L328 295"/>
<path stroke="#bbaac8" d="M0 199L289 299"/>
<path stroke="#c0aac8" d="M7 161L252 287"/>
<path stroke="#c8aac0" d="M29 129L222 262"/>
<path stroke="#c8aab4" d="M61 107L204 228"/>
<path stroke="#c8a9a9" d="M102 100L200 187"/>
<path stroke="#c8b4a9" d="M140 108L213 150"/>
<path stroke="#c8c0a9" d="M172 130L238 121"/>
<path stroke="#c0c8a9" d="M193 163L273 103"/>
<path stroke="#b9c8a9" d="M199 202L312 100"/>
<path stroke="#acc8a9" d="M191 240L349 113"/>
<path stroke="#a9c8b0" d="M169 272L378 138"/>
<path stroke="#a9c8c0" d="M136 293L396 173"/>
<path stroke="#a9c6c8" d="M97 299L399 212"/>
<path stroke="#a9bfc8" d="M59 291L386 249"/>
<path stroke="#a9afc8" d="M27 269L361 278"/>
<path stroke="#aca9c8" d="M6 236L326 296"/>
<path stroke="#baa9c8" d="M0 197L287 299"/>
<path stroke="#c0a9c8" d="M8 159L250 286"/>
<path stroke="#c8a9c0" d="M30 127L221 261"/>
<path stroke="#c8a9b3" d="M63 106L203 226"/>
<path stroke="#c8a8a8" d="M104 100L201 185"/>
<path stroke="#c8b3a8" d="M142 109L214 148"/>
<path stroke="#c8c0a8" d="M173 132L240 119"/>
<path stroke="#c0c8a8" d="M193 165L275 103"/>
<path stroke="#b8c8a8" d="M199 204L314 101"/>
<path stroke="#abc8a8" d="M190 242L351 114"/>
<path stroke="#a8c8af" d="M167 273L380 140"/>
<path stroke="#a8c8c0" d="M134 293L396 175"/>
<path stroke="#a8c6c8" d="M95 299L398 214"/>
<path stroke="#a8bec8" d="M57 290L385 251"/>
<path stroke="#a8aec8" d="M26 267L359 280"/>
<path stroke="#aba8c8" d="M6 234L324 296"/>
<path stroke="#b9a8c8" d="M0 195L285 298"/>
<path stroke="#c0a8c8" d="M9 157L248 285"/>
<path stroke="#c8a8c0" d="M32 126L219 259"/>
<path stroke="#c8a8b2" d="M65 106L203 224"/>
<path stroke="#c8a7a7" d="M106 100L201 183"/>
<path stroke="#c8b2a7" d="M143 110L215 147"/>
<path stroke="#c8c0a7" d="M174 133L241 118"/>
<path stroke="#c0c8a7" d="M194 167L277 102"/>
<path stroke="#b7c8a7" d="M199 206L316 101"/>
<path stroke="#aac8a7" d="M189 243L352 115"/>
<path stroke="#a7c8ae" d="M166 274L381 141"/>
<path stroke="#a7c8bf" d="M132 294L397 177"/>
<path stroke="#a7c6c8" d="M93 299L398 216"/>
<path stroke="#a7bdc8" d="M56 289L384 252"/>
<path stroke="#a7adc8" d="M25 266L358 281"/>
<path stroke="#aaa7c8" d="M5 232L322 297"/>
<path stroke="#b8a7c8" d="M0 193L283 298"/>
<path stroke="#c0a7c8" d="M10 156L247 284"/>
<path stroke="#c8a7c0" d="M33 125L218 258"/>
<path stroke="#c8a7b1" d="M67 105L202 222"/>
<path stroke="#c8a5a5" d="M108 100L201 181"/>
<path stroke="#c8b1a5" d="M145 111L216 145"/>
<path stroke="#c8c0a5" d="M176 135L243 117"/>
<path stroke="#c0c8a5" d="M195 169L279 102"/>
<path stroke="#b6c8a5" d="M199 208L318 101"/>
<path stroke="#a9c8a5" d="M188 245L354 116"/>
<path stroke="#a5c8ad" d="M164 276L382 143"/>
<path stroke="#a5c8be" d="M130 295L397 179"/>
<path stroke="#a5c6c8" d="M91 299L398 218"/>
<path stroke="#a5bcc8" d="M54 288L383 254"/>
<path stroke="#a5acc8" d="M23 264L356 282"/>
<path stroke="#a9a5c8" d="M4 230L320 297"/>
<path stroke="#b7a5c8" d="M0 191L281 298"/>
<path stroke="#c0a5c8" d="M11 154L245 283"/>
<path stroke="#c8a5c0" d="M35 123L217 256"/>
<path stroke="#c8a5b0" d="M69 104L202 220"/>
<path stroke="#c8a3a3" d="M110 100L202 179"/>
<path stroke="#c8b0a3" d="M147 111L217 143"/>
<path stroke="#c8c0a3" d="M177 136L245 116"/>
<path stroke="#c0c8a3" d="M195 171L281 101"/>
<path stroke="#b5c8a3" d="M199 210L320 102"/>
<path stroke="#a8c8a3" d="M188 247L356 117"/>
<path stroke="#a3c8ac" d="M163 277L383 145"/>
<path stroke="#a3c8bd" d="M128 295L398 181"/>
<path stroke="#a3c6c8" d="M89 299L397 220"/>
<path stroke="#a3bbc8" d="M52 288L382 256"/>
<path stroke="#a3abc8" d="M22 263L354 283"/>
<path stroke="#a8a3c8" d="M4 228L318 298"/>
<path stroke="#b6a3c8" d="M0 189L279 297"/>
<path stroke="#c0a3c8" d="M11 152L243 282"/>
<path stroke="#c8a3c0" d="M36 122L216 254"/>
<path stroke="#c8a3af" d="M71 104L201 218"/>
<path stroke="#c8a1a1" d="M112 100L202 177"/>
<path stroke="#c8afa1" d="M149 112L218 142"/>
<path stroke="#c8c0a1" d="M178 138L246 115"/>
<path stroke="#c0c8a1" d="M196 173L283 101"/>
<path stroke="#b4c8a1" d="M199 212L322 102"/>
<path stroke="#a7c8a1" d="M187 249L357 118"/>
<path stroke="#a1c8ab" d="M161 278L384 146"/>
<path stroke="#a1c8bc" d="M126 296L398 183"/>
<path stroke="#a1c6c8" d="M87 299L397 222"/>
<path stroke="#a1bac8" d="M50 287L381 257"/>
<path stroke="#a1aac8" d="M21 261L353 284"/>
<path stroke="#a7a1c8" d="M3 226L316 298"/>
<path stroke="#b5a1c8" d="M0 187L277 297"/>
<path stroke="#c0a1c8" d="M12 150L242 281"/>
<path stroke="#c8a1c0" d="M38 121L215 253"/>
<path stroke="#c8a1ae" d="M73 103L201 216"/>
<path stroke="#c89f9f" d="M114 101L202 175"/>
<path stroke="#c8ae9f" d="M150 113L219 140"/>
<path stroke="#c8c09f" d="M180 140L248 114"/>
<path stroke="#c0c89f" d="M196 175L285 101"/>
<path stroke="#b3c89f" d="M198 214L324 102"/>
<path stroke="#a5c89f" d="M186 250L359 119"/>
<path stroke="#9fc8aa" d="M159 280L385 148"/>
<path stroke="#9fc8bb" d="M124 296L398 185"/>
<path stroke="#9fc6c8" d="M85 298L397 224"/>
<path stroke="#9fb9c8" d="M49 286L380 259"/>
<path stroke="#9fa9c8" d="M19 259L351 285"/>
<path stroke="#a69fc8" d="M3 224L314 298"/>
<path stroke="#b49fc8" d="M1 185L275 297"/>
<path stroke="#c09fc8" d="M13 149L240 280"/>
<path stroke="#c89fc0" d="M40 119L214 251"/>
<path stroke="#c89fad" d="M75 103L201 214"/>
<path stroke="#c89d9d" d="M116 101L203 173"/>
<path stroke="#c8ad9d" d="M152 114L220 138"/>
<path stroke="#c8c09d" d="M181 141L250 113"/>
<path stroke="#c0c89d" d="M197 177L287 100"/>
<path stroke="#b2c89d" d="M198 216L326 103"/>
<path stroke="#a3c89d" d="M185 252L361 120"/>
<path stroke="#9dc8a9" d="M158 281L386 150"/>
<path stroke="#9dc8ba" d="M122 297L399 187"/>
<path stroke="#9dc6c8" d="M83 298L396 226"/>
<path stroke="#9db8c8" d="M47 285L379 261"/>
<path stroke="#9da8c8" d="M18 258L349 286"/>
<path stroke="#a49dc8" d="M2 222L312 299"/>
<path stroke="#b39dc8" d="M1 183L273 296"/>
<path stroke="#c09dc8" d="M14 147L238 279"/>
<path stroke="#c89dc0" d="M41 118L213 249"/>
<path stroke="#c89dac" d="M77 102L200 212"/>
<path stroke="#c89b9b" d="M118 101L204 171"/>
<path stroke="#c8ac9b" d="M154 116L222 137"/>
<path stroke="#c8c09b" d="M182 143L252 112"/>
<path stroke="#c0c89b" d="M197 179L289 100"/>
<path stroke="#b1c89b" d="M198 218L328 104"/>
<path stroke="#a1c89b" d="M183 254L362 122"/>
<path stroke="#9bc8a8" d="M156 282L387 152"/>
<path stroke="#9bc8b9" d="M120 297L399 189"/>
<path stroke="#9bc6c8" d="M81 298L395 228"/>
<path stroke="#9bb7c8" d="M45 283L377 262"/>
<path stroke="#9ba7c8" d="M17 256L347 287"/>
<path stroke="#a29bc8" d="M2 220L310 299"/>
<path stroke="#b29bc8" d="M1 181L271 295"/>
<path stroke="#c09bc8" d="M16 145L237 277"/>
<path stroke="#c89bc0" d="M43 117L212 247"/>
<path stroke="#c89bab" d="M79 102L200 210"/>
<path stroke="#c89999" d="M120 102L204 169"/>
<path stroke="#c8ab99" d="M156 117L223 135"/>
<path stroke="#c8c099" d="M183 144L253 111"/>
<path stroke="#c0c899" d="M198 181L291 100"/>
<path stroke="#b0c899" d="M197 220L330 104"/>
<path stroke="#9fc899" d="M182 256L364 123"/>
<path stroke="#99c8a7" d="M155 283L388 153"/>
<path stroke="#99c8b8" d="M118 298L399 191"/>
<path stroke="#99c6c8" d="M79 297L395 230"/>
<path stroke="#99b6c8" d="M43 282L376 264"/>
<path stroke="#99a6c8" d="M16 255L346 288"/>
<path stroke="#a099c8" d="M1 218L308 299"/>
<path stroke="#b199c8" d="M2 179L269 295"/>
<path stroke="#c099c8" d="M17 143L235 276"/>
<path stroke="#c899bf" d="M44 116L211 246"/>
<path stroke="#c899aa" d="M81 101L200 208"/>
<path stroke="#c89797" d="M122 102L205 168"/>
<path stroke="#c8aa97" d="M157 118L224 134"/>
<path stroke="#c8c097" d="M184 146L255 110"/>
<path stroke="#c0c897" d="M198 183L293 100"/>
<path stroke="#afc897" d="M197 222L331 105"/>
<path stroke="#9dc897" d="M181 257L365 124"/>
<path stroke="#97c8a6" d="M153 284L389 155"/>
<path stroke="#97c8b7" d="M116 298L399 193"/>
<path stroke="#97c6c8" d="M77 297L394 231"/>
<path stroke="#97b5c8" d="M42 281L375 265"/>
<path stroke="#97a4c8" d="M15 253L344 289"/>
<path stroke="#9e97c8" d="M1 216L306 299"/>
<path stroke="#b097c8" d="M2 177L268 294"/>
<path stroke="#c097c8" d="M18 142L234 275"/>
<path stroke="#c897be" d="M46 115L210 244"/>
<path stroke="#c897a9" d="M83 101L200 206"/>
<path stroke="#c89595" d="M123 102L205 166"/>
<path stroke="#c8a995" d="M159 119L225 132"/>
<path stroke="#c8bf95" d="M185 148L257 109"/>
<path stroke="#c0c895" d="M198 184L295 100"/>
<path stroke="#aec895" d="M197 223L333 105"/>
<path stroke="#9bc895" d="M180 259L367 125"/>
<path stroke="#95c8a4" d="M151 285L390 157"/>
<path stroke="#95c8b6" d="M115 298L399 195"/>
<path stroke="#95c6c8" d="M76 297L394 233"/>
<path stroke="#95b4c8" d="M40 280L374 267"/>
<path stroke="#95a2c8" d="M14 251L342 290"/>
<path stroke="#9c95c8" d="M1 215L304 299"/>
<path stroke="#af95c8" d="M2 176L266 294"/>
<path stroke="#c095c8" d="M19 140L232 274"/>
<path stroke="#c895bd" d="M48 114L209 242"/>
<path stroke="#c895a8" d="M84 101L200 204"/>
<path stroke="#c89393" d="M125 103L206 164"/>
<path stroke="#c8a893" d="M160 120L227 131"/>
<path stroke="#c8be93" d="M186 150L259 108"/>
<path stroke="#c0c893" d="M199 186L297 100"/>
<path stroke="#adc893" d="M196 225L335 106"/>
<path stroke="#99c893" d="M179 260L368 127"/>
<path stroke="#93c8a2" d="M149 286L391 159"/>
<path stroke="#93c8b5" d="M113 299L399 197"/>
<path stroke="#93c6c8" d="M74 296L393 235"/>
<path stroke="#93b3c8" d="M39 279L372 268"/>
<path stroke="#93a0c8" d="M13 249L340 291"/>
<path stroke="#9a93c8" d="M0 213L302 299"/>
<path stroke="#ae93c8" d="M3 174L264 293"/>
<path stroke="#c093c8" d="M20 139L231 272"/>
<path stroke="#c893bc" d="M50 113L208 240"/>
<path stroke="#c893a7" d="M86 100L200 202"/>
<path stroke="#c89191" d="M127 103L207 162"/>
<path stroke="#c8a791" d="M162 121L228 129"/>
<path stroke="#c8bd91" d="M187 151L261 107"/>
<path stroke="#c0c891" d="M199 188L299 100"/>
<path stroke="#acc891" d="M196 227L337 107"/>
<path stroke="#97c891" d="M178 262L370 128"/>
<path stroke="#91c8a0" d="M148 287L392 161"/>
<path stroke="#91c8b4" d="M111 299L399 199"/>
<path stroke="#91c6c8" d="M72 296L392 237"/>
<path stroke="#91b2c8" d="M37 278L371 270"/>
<path stroke="#919ec8" d="M12 248L338 292"/>
<path stroke="#9891c8" d="M0 211L300 299"/>
<path stroke="#ad91c8" d="M3 172L262 292"/>
<path stroke="#c091c8" d="M21 137L229 271"/>
<path stroke="#c891bb" d="M51 112L207 238"/>
<path stroke="#c891a6" d="M88 100L200 200"/>
<path stroke="#c88f8f" d="M129 104L208 160"/>
<path stroke="#c8a68f" d="M164 123L230 128"/>
<path stroke="#c8bc8f" d="M188 153L262 107"/>
<path stroke="#c0c88f" d="M199 190L301 100"/>
<path stroke="#abc88f" d="M195 229L339 108"/>
<path stroke="#95c88f" d="M176 264L371 130"/>
<path stroke="#8fc89e" d="M146 288L392 162"/>
<path stroke="#8fc8b3" d="M109 299L399 201"/>
<path stroke="#8fc6c8" d="M70 295L391 239"/>
<path stroke="#8fb1c8" d="M35 276L369 271"/>
<path stroke="#8f9cc8" d="M11 246L337 292"/>
<path stroke="#968fc8" d="M0 209L298 299"/>
<path stroke="#ac8fc8" d="M4 170L260 291"/>
<path stroke="#c08fc8" d="M23 135L228 269"/>
<path stroke="#c88fba" d="M53 111L207 237"/>
<path stroke="#c88fa4" d="M90 100L200 198"/>
<path stroke="#c88c8c" d="M131 105L208 158"/>
<path stroke="#c8a48c" d="M165 124L231 127"/>
<path stroke="#c8bb8c" d="M189 155L264 106"/>
<path stroke="#c0c88c" d="M199 192L303 100"/>
<path stroke="#aac88c" d="M194 231L341 108"/>
<path stroke="#93c88c" d="M175 265L372 131"/>
<path stroke="#8cc89c" d="M144 289L393 164"/>
<path stroke="#8cc8b2" d="M107 299L399 203"/>
<path stroke="#8cc6c8" d="M68 294L391 241"/>
<path stroke="#8cb0c8" d="M34 275L368 272"/>
<path stroke="#8c9ac8" d="M10 244L335 293"/>
<path stroke="#948cc8" d="M0 207L296 299"/>
<path stroke="#ab8cc8" d="M5 168L258 291"/>
<path stroke="#c08cc8" d="M24 134L227 268"/>
<path stroke="#c88cb9" d="M55 110L206 235"/>
<path stroke="#c88ca2" d="M92 100L200 196"/>
<path stroke="#c88989" d="M133 105L209 156"/>
<path stroke="#c8a289" d="M167 125L233 125"/>
<path stroke="#c8ba89" d="M190 157L266 105"/>
<path stroke="#c0c889" d="M199 194L305 100"/>
<path stroke="#a9c889" d="M194 233L343 109"/>
<path stroke="#91c889" d="M174 267L374 133"/>
<path stroke="#89c89a" d="M142 290L394 166"/>
<path stroke="#89c8b1" d="M105 299L399 205"/>
<path stroke="#89c6c8" d="M66 294L390 243"/>
<path stroke="#89afc8" d="M32 274L366 274"/>
<path stroke="#8998c8" d="M9 242L333 294"/>
<path stroke="#9289c8" d="M0 205L294 299"/>
<path stroke="#aa89c8" d="M5 166L256 290"/>
<path stroke="#c089c8" d="M25 132L225 266"/>
<path stroke="#c889b8" d="M57 109L205 233"/>
<path stroke="#c889a0" d="M94 100L200 194"/>
<path stroke="#c88686" d="M135 106L210 155"/>
<path stroke="#c8a086" d="M168 127L234 124"/>
<path stroke="#c8b986" d="M191 158L268 105"/>
<path stroke="#c0c886" d="M199 196L307 100"/>
<path stroke="#a8c886" d="M193 235L344 110"/>
<path stroke="#8fc886" d="M172 268L375 134"/>
<path stroke="#86c898" d="M141 291L394 168"/>
<path stroke="#86c8b0" d="M103 299L399 207"/>
<path stroke="#86c6c8" d="M64 293L389 244"/>
<path stroke="#86aec8" d="M31 272L365 275"/>
<path stroke="#8696c8" d="M8 241L331 294"/>
<path stroke="#9086c8" d="M0 203L292 299"/>
<path stroke="#a986c8" d="M6 164L255 289"/>
<path stroke="#c086c8" d="M27 131L224 265"/>
<path stroke="#c886b7" d="M58 108L205 231"/>
<path stroke="#c8869e" d="M96 100L200 192"/>
<path stroke="#c88383" d="M137 107L211 153"/>
<path stroke="#c89e83" d="M169 128L236 123"/>
<path stroke="#c8b883" d="M191 160L270 104"/>
<path stroke="#c0c883" d="M199 198L309 100"/>
<path stroke="#a7c883" d="M192 237L346 111"/>
<path stroke="#8dc883" d="M171 269L376 136"/>
<path stroke="#83c896" d="M139 291L395 170"/>
<path stroke="#83c8af" d="M101 299L399 209"/>
<path stroke="#83c6c8" d="M62 292L388 246"/>
<path stroke="#83adc8" d="M30 271L363 276"/>
<path stroke="#8394c8" d="M8 239L329 295"/>
<path stroke="#8e83c8" d="M0 201L290 299"/>
<path stroke="#a883c8" d="M7 162L253 288"/>
<path stroke="#c083c8" d="M28 130L223 263"/>
<path stroke="#c883b6" d="M60 108L204 229"/>
<path stroke="#c8839c" d="M98 100L200 190"/>
<path stroke="#c88080" d="M139 107L212 151"/>
<path stroke="#c89c80" d="M171 129L237 121"/>
<path stroke="#c8b780" d="M192 162L272 103"/>
<path stroke="#c0c880" d="M199 200L311 100"/>
<path stroke="#a6c880" d="M192 239L348 112"/>
<path stroke="#8ac880" d="M170 271L378 137"/>
<path stroke="#80c894" d="M137 292L396 172"/>
<path stroke="#80c8ae" d="M99 299L399 211"/>
<path stroke="#80c6c8" d="M60 292L387 248"/>
<path stroke="#80acc8" d="M28 270L362 278"/>
<path stroke="#8092c8" d="M7 237L327 296"/>
<path stroke="#8b80c8" d="M0 199L288 299"/>
<path stroke="#a780c8" d="M7 160L251 287"/>
<path stroke="#c080c8" d="M29 128L221 262"/>
<path stroke="#c880b5" d="M62 107L203 227"/>
<path stroke="#c8809a" d="M100 100L200 188"/>
<path stroke="#c87d7d" d="M140 108L213 149"/>
<path stroke="#c89a7d" d="M172 131L239 120"/>
<path stroke="#c8b67d" d="M193 164L274 103"/>
<path stroke="#c0c87d" d="M199 202L313 100"/>
<path stroke="#a4c87d" d="M191 240L350 113"/>
<path stroke="#87c87d" d="M168 272L379 139"/>
<path stroke="#7dc892" d="M135 293L396 174"/>
<path stroke="#7dc8ad" d="M97 299L399 213"/>
<path stroke="#7dc6c8" d="M59 291L386 250"/>
<path stroke="#7dabc8" d="M27 268L360 279"/>
<path stroke="#7d90c8" d="M6 235L325 296"/>
<path stroke="#887dc8" d="M0 197L286 299"/>
<path stroke="#a67dc8" d="M8 159L249 286"/>
<path stroke="#c07dc8" d="M31 127L220 260"/>
<path stroke="#c87db4" d="M64 106L203 225"/>
<path stroke="#c87d98" d="M102 100L200 186"/>
<path stroke="#c87a7a" d="M142 109L214 148"/>
<path stroke="#c8987a" d="M174 132L240 119"/>
<path stroke="#c8b57a" d="M194 166L276 102"/>
<path stroke="#c0c87a" d="M199 204L315 101"/>
<path stroke="#a2c87a" d="M190 242L351 114"/>
<path stroke="#84c87a" d="M167 274L380 140"/>
<path stroke="#7ac890" d="M133 294L397 176"/>
<path stroke="#7ac8ac" d="M95 299L398 215"/>
<path stroke="#7ac6c8" d="M57 290L385 251"/>
<path stroke="#7aaac8" d="M25 267L359 280"/>
<path stroke="#7a8ec8" d="M5 233L323 297"/>
<path stroke="#857ac8" d="M0 195L284 298"/>
<path stroke="#a47ac8" d="M9 157L248 285"/>
<path stroke="#c07ac8" d="M32 125L219 259"/>
<path stroke="#c87ab3" d="M66 105L202 223"/>
<path stroke="#c87a96" d="M104 100L201 184"/>
<path stroke="#c87777" d="M144 110L215 146"/>
<path stroke="#c89677" d="M175 134L242 118"/>
<path stroke="#c8b477" d="M194 168L278 102"/>
<path stroke="#c0c877" d="M199 206L317 101"/>
<path stroke="#a0c877" d="M189 244L353 115"/>
<path stroke="#81c877" d="M165 275L381 142"/>
<path stroke="#77c88e" d="M131 294L397 178"/>
<path stroke="#77c8ab" d="M93 299L398 217"/>
<path stroke="#77c6c8" d="M55 289L384 253"/>
<path stroke="#77a9c8" d="M24 265L357 281"/>
<path stroke="#778bc8" d="M5 231L321 297"/>
<path stroke="#8277c8" d="M0 193L282 298"/>
<path stroke="#a277c8" d="M10 155L246 284"/>
<path stroke="#c077c8" d="M34 124L218 257"/>
<path stroke="#c877b2" d="M68 105L202 221"/>
<path stroke="#c87794" d="M106 100L201 182"/>
<path stroke="#c87474" d="M146 111L216 144"/>
<path stroke="#c89474" d="M176 135L244 117"/>
<path stroke="#c8b374" d="M195 170L280 102"/>
<path stroke="#c0c874" d="M199 208L319 101"/>
<path stroke="#9ec874" d="M188 246L355 116"/>
<path stroke="#7ec874" d="M164 276L382 144"/>
<path stroke="#74c88b" d="M129 295L397 180"/>
<path stroke="#74c8aa" d="M91 299L398 219"/>
<path stroke="#74c6c8" d="M53 288L383 255"/>
<path stroke="#74a8c8" d="M23 264L355 282"/>
<path stroke="#7488c8" d="M4 229L319 297"/>
<path stroke="#7f74c8" d="M0 191L280 298"/>
<path stroke="#a074c8" d="M11 153L244 283"/>
<path stroke="#c074c8" d="M35 123L217 255"/>
<path stroke="#c874b1" d="M70 104L202 219"/>
<path stroke="#c87492" d="M108 100L201 180"/>
<path stroke="#c87070" d="M148 112L217 143"/>
<path stroke="#c89270" d="M177 137L245 115"/>
<path stroke="#c8b270" d="M196 172L282 101"/>
<path stroke="#c0c870" d="M199 210L321 102"/>
<path stroke="#9cc870" d="M187 248L356 117"/>
<path stroke="#7bc870" d="M162 277L384 145"/>
<path stroke="#70c888" d="M127 296L398 182"/>
<path stroke="#70c8a9" d="M89 299L397 221"/>
<path stroke="#70c6c8" d="M51 287L382 256"/>
<path stroke="#70a7c8" d="M22 262L354 284"/>
<path stroke="#7085c8" d="M3 227L317 298"/>
<path stroke="#7c70c8" d="M0 189L278 297"/>
<path stroke="#9e70c8" d="M12 151L243 282"/>
<path stroke="#c070c8" d="M37 122L215 254"/>
<path stroke="#c870b0" d="M72 103L201 217"/>
<path stroke="#c87090" d="M110 100L202 178"/>
<path stroke="#c86c6c" d="M149 113L218 141"/>
<path stroke="#c8906c" d="M179 138L247 114"/>
<path stroke="#c8b16c" d="M196 173L284 101"/>
<path stroke="#c0c86c" d="M199 212L323 102"/>
<path stroke="#9ac86c" d="M186 249L358 118"/>
<path stroke="#78c86c" d="M161 279L385 147"/>
<path stroke="#6cc885" d="M126 296L398 184"/>
<path stroke="#6cc8a8" d="M87 299L397 223"/>
<path stroke="#6cc6c8" d="M50 286L381 258"/>
<path stroke="#6ca6c8" d="M20 261L352 285"/>
<path stroke="#6c82c8" d="M3 226L315 298"/>
<path stroke="#796cc8" d="M0 187L276 297"/>
<path stroke="#9c6cc8" d="M13 150L241 281"/>
<path stroke="#c06cc8" d="M38 120L214 252"/>
<path stroke="#c86caf" d="M73 103L201 215"/>
<path stroke="#c86c8e" d="M112 100L202 176"/>
<path stroke="#c86868" d="M151 114L220 139"/>
<path stroke="#c88e68" d="M180 140L249 113"/>
<path stroke="#c8b068" d="M197 175L285 100"/>
<path stroke="#c0c868" d="M198 214L324 103"/>
<path stroke="#98c868" d="M185 251L360 120"/>
<path stroke="#75c868" d="M159 280L386 149"/>
<path stroke="#68c882" d="M124 297L399 185"/>
<path stroke="#68c8a7" d="M85 298L396 224"/>
<path stroke="#68c6c8" d="M48 285L379 260"/>
<path stroke="#68a4c8" d="M19 259L350 286"/>
<path stroke="#687fc8" d="M2 224L314 299"/>
<path stroke="#7668c8" d="M1 185L275 296"/>
<path stroke="#9a68c8" d="M14 148L239 279"/>
<path stroke="#c068c8" d="M40 119L213 250"/>
<path stroke="#c868ae" d="M75 102L200 214"/>
<path stroke="#c8688b" d="M114 101L203 175"/>
<path stroke="#c86464" d="M153 115L221 138"/>
<path stroke="#c88b64" d="M181 142L250 112"/>
<path stroke="#c8af64" d="M197 177L287 100"/>
<path stroke="#bfc864" d="M198 216L326 103"/>
<path stroke="#96c864" d="M184 253L361 121"/>
<path stroke="#71c864" d="M157 281L387 150"/>
<path stroke="#64c87f" d="M122 297L399 187"/>
<path stroke="#64c8a5" d="M83 298L396 226"/>
<path stroke="#64c6c8" d="M46 284L378 261"/>
<path stroke="#64a2c8" d="M18 257L349 287"/>
<path stroke="#647cc8" d="M2 222L312 299"/>
<path stroke="#7264c8" d="M1 183L273 296"/>
<path stroke="#9864c8" d="M15 146L238 278"/>
<path stroke="#c064c8" d="M42 118L212 249"/>
<path stroke="#c864ad" d="M77 102L200 212"/>
<path stroke="#c86488" d="M116 101L203 173"/>
<path stroke="#c86060" d="M154 116L222 136"/>
<path stroke="#c88860" d="M182 143L252 111"/>
<path stroke="#c8ae60" d="M197 179L289 100"/>
<path stroke="#bec860" d="M198 218L328 104"/>
<path stroke="#94c860" d="M183 254L363 122"/>
<path stroke="#6dc860" d="M156 282L388 152"/>
<path stroke="#60c87c" d="M120 297L399 189"/>
<path stroke="#60c8a3" d="M81 298L395 228"/>
<path stroke="#60c6c8" d="M45 283L377 263"/>
<path stroke="#60a0c8" d="M17 256L347 288"/>
<path stroke="#6079c8" d="M2 220L310 299"/>
<path stroke="#6e60c8" d="M1 181L271 295"/>
<path stroke="#9660c8" d="M16 145L236 277"/>
<path stroke="#c060c8" d="M43 117L211 247"/>
<path stroke="#c860ac" d="M79 102L200 210"/>
<path stroke="#c86085" d="M118 101L204 171"/>
<path stroke="#c85c5c" d="M156 117L223 135"/>
<path stroke="#c8855c" d="M183 145L254 110"/>
<path stroke="#c8ad5c" d="M198 181L291 100"/>
<path stroke="#bdc85c" d="M197 220L330 104"/>
<path stroke="#92c85c" d="M182 256L364 123"/>
<path stroke="#69c85c" d="M154 283L389 154"/>
<path stroke="#5cc879" d="M118 298L399 191"/>
<path stroke="#5cc8a1" d="M79 297L395 230"/>
<path stroke="#5cc6c8" d="M43 282L376 264"/>
<path stroke="#5c9ec8" d="M16 254L345 289"/>
<path stroke="#5c76c8" d="M1 218L308 299"/>
<path stroke="#6a5cc8" d="M2 179L269 295"/>
<path stroke="#945cc8" d="M17 143L235 276"/>
<path stroke="#c05cc8" d="M45 116L210 245"/>
<path stroke="#c85cab" d="M81 101L200 208"/>
<path stroke="#c85c82" d="M120 102L204 169"/>
<path stroke="#c85757" d="M158 118L225 133"/>
<path stroke="#c88257" d="M184 147L256 110"/>
<path stroke="#c8ac57" d="M198 183L293 100"/>
<path stroke="#bcc857" d="M197 222L332 105"/>
<path stroke="#90c857" d="M181 258L366 125"/>
<path stroke="#65c857" d="M152 284L389 156"/>
<path stroke="#57c876" d="M116 298L399 193"/>
<path stroke="#57c89f" d="M77 297L394 232"/>
<path stroke="#57c6c8" d="M41 281L374 266"/>
<path stroke="#579cc8" d="M15 252L343 289"/>
<path stroke="#5772c8" d="M1 216L306 299"/>
<path stroke="#6657c8" d="M2 177L267 294"/>
<path stroke="#9257c8" d="M18 141L233 274"/>
<path stroke="#bf57c8" d="M47 115L210 243"/>
<path stroke="#c857aa" d="M83 101L200 206"/>
<path stroke="#c8577f" d="M122 102L205 167"/>
<path stroke="#c85252" d="M159 119L226 132"/>
<path stroke="#c87f52" d="M185 148L258 109"/>
<path stroke="#c8ab52" d="M198 185L295 100"/>
<path stroke="#bbc852" d="M196 224L334 106"/>
<path stroke="#8ec852" d="M180 259L367 126"/>
<path stroke="#61c852" d="M151 285L390 158"/>
<path stroke="#52c872" d="M114 298L399 195"/>
<path stroke="#52c89d" d="M75 296L393 234"/>
<path stroke="#52c6c8" d="M40 280L373 267"/>
<path stroke="#529ac8" d="M14 251L341 290"/>
<path stroke="#526ec8" d="M1 214L304 299"/>
<path stroke="#6252c8" d="M3 175L265 293"/>
<path stroke="#9052c8" d="M19 140L232 273"/>
<path stroke="#be52c8" d="M48 114L209 241"/>
<path stroke="#c852a9" d="M85 101L200 204"/>
<path stroke="#c8527c" d="M124 103L206 165"/>
<path stroke="#c84d4d" d="M161 121L227 130"/>
<path stroke="#c87c4d" d="M186 150L259 108"/>
<path stroke="#c8aa4d" d="M199 187L297 100"/>
<path stroke="#bac84d" d="M196 226L336 106"/>
<path stroke="#8bc84d" d="M178 261L369 127"/>
<path stroke="#5dc84d" d="M149 286L391 159"/>
<path stroke="#4dc86e" d="M112 299L399 197"/>
<path stroke="#4dc89b" d="M73 296L393 236"/>
<path stroke="#4dc6c8" d="M38 278L372 269"/>
<path stroke="#4d98c8" d="M13 249L340 291"/>
<path stroke="#4d6ac8" d="M0 212L302 299"/>
<path stroke="#5e4dc8" d="M3 173L263 293"/>
<path stroke="#8e4dc8" d="M21 138L230 272"/>
<path stroke="#bd4dc8" d="M50 113L208 240"/>
<path stroke="#c84da8" d="M87 100L200 202"/>
<path stroke="#c84d79" d="M126 103L206 163"/>
<path stroke="#c84848" d="M163 122L229 129"/>
<path stroke="#c87948" d="M187 152L261 107"/>
<path stroke="#c8a948" d="M199 189L299 100"/>
<path stroke="#b9c848" d="M195 228L338 107"/>
<path stroke="#88c848" d="M177 263L370 129"/>
<path stroke="#58c848" d="M147 287L392 161"/>
<path stroke="#48c86a" d="M110 299L399 199"/>
<path stroke="#48c899" d="M71 295L392 238"/>
<path stroke="#48c6c8" d="M36 277L370 270"/>
<path stroke="#4896c8" d="M12 247L338 292"/>
<path stroke="#4866c8" d="M0 210L300 299"/>
<path stroke="#5a48c8" d="M4 171L261 292"/>
<path stroke="#8b48c8" d="M22 136L229 270"/>
<path stroke="#bc48c8" d="M52 112L207 238"/>
<path stroke="#c848a7" d="M89 100L200 200"/>
<path stroke="#c84876" d="M128 104L207 161"/>
<path stroke="#c84343" d="M164 123L230 127"/>
<path stroke="#c87643" d="M188 154L263 106"/>
<path stroke="#c8a843" d="M199 191L301 100"/>
<path stroke="#b8c843" d="M195 230L340 108"/>
<path stroke="#85c843" d="M176 264L372 130"/>
<path stroke="#53c843" d="M145 288L393 163"/>
<path stroke="#43c866" d="M108 299L399 201"/>
<path stroke="#43c897" d="M69 295L391 240"/>
<path stroke="#43c6c8" d="M35 276L369 272"/>
<path stroke="#4394c8" d="M11 245L336 293"/>
<path stroke="#4362c8" d="M0 208L298 299"/>
<path stroke="#5543c8" d="M4 169L259 291"/>
<path stroke="#8843c8" d="M23 135L227 269"/>
<path stroke="#bb43c8" d="M54 111L206 236"/>
<path stroke="#c843a6" d="M91 100L200 198"/>
<path stroke="#c84373" d="M130 104L208 159"/>
<path stroke="#c83d3d" d="M166 124L232 126"/>
<path stroke="#c8723d" d="M189 155L265 106"/>
<path stroke="#c8a73d" d="M199 193L303 100"/>
<path stroke="#b7c83d" d="M194 232L341 109"/>
<path stroke="#82c83d" d="M175 266L373 132"/>
<path stroke="#4ec83d" d="M144 289L393 165"/>
<path stroke="#3dc862" d="M106 299L399 203"/>
<path stroke="#3dc895" d="M67 294L390 241"/>
<path stroke="#3dc6c8" d="M33 275L367 273"/>
<path stroke="#3d92c8" d="M10 244L334 293"/>
<path stroke="#3d5ec8" d="M0 206L296 299"/>
<path stroke="#503dc8" d="M5 167L258 290"/>
<path stroke="#853dc8" d="M24 133L226 267"/>
<path stroke="#ba3dc8" d="M55 110L206 234"/>
<path stroke="#c83da4" d="M93 100L200 196"/>
<path stroke="#c83d6f" d="M132 105L209 158"/>
<path stroke="#c83737" d="M167 126L233 125"/>
<path stroke="#c86e37" d="M190 157L267 105"/>
<path stroke="#c8a537" d="M199 195L305 100"/>
<path stroke="#b6c837" d="M193 234L343 110"/>
<path stroke="#7fc837" d="M173 267L374 133"/>
<path stroke="#49c837" d="M142 290L394 167"/>
<path stroke="#37c85e" d="M104 299L399 205"/>
<path stroke="#37c893" d="M65 293L389 243"/>
<path stroke="#37c6c8" d="M32 273L366 274"/>
<path stroke="#3790c8" d="M9 242L332 294"/>
<path stroke="#375ac8" d="M0 204L294 299"/>
<path stroke="#4b37c8" d="M6 165L256 289"/>
<path stroke="#8237c8" d="M26 132L225 266"/>
<path stroke="#b937c8" d="M57 109L205 232"/>
<path stroke="#c837a2" d="M95 100L200 194"/>
<path stroke="#c8376b" d="M134 106L210 156"/>
<path stroke="#c83131" d="M169 127L235 123"/>
<path stroke="#c86a31" d="M191 159L269 104"/>
<path stroke="#c8a331" d="M199 197L307 100"/>
<path stroke="#b5c831" d="M193 236L345 110"/>
<path stroke="#7cc831" d="M172 269L376 135"/>
<path stroke="#44c831" d="M140 291L395 169"/>
<path stroke="#31c859" d="M102 299L399 207"/>
<path stroke="#31c891" d="M63 293L389 245"/>
<path stroke="#31c6c8" d="M30 272L364 276"/>
<path stroke="#318ec8" d="M8 240L330 295"/>
<path stroke="#3155c8" d="M0 202L292 299"/>
<path stroke="#4631c8" d="M6 163L254 289"/>
<path stroke="#7f31c8" d="M27 130L223 264"/>
<path stroke="#b831c8" d="M59 108L204 230"/>
<path stroke="#c831a0" d="M97 100L200 192"/>
<path stroke="#c83167" d="M136 106L210 154"/>
<path stroke="#c82b2b" d="M170 129L236 122"/>
<path stroke="#c8662b" d="M192 161L271 104"/>
<path stroke="#c8a12b" d="M199 199L309 100"/>
<path stroke="#b4c82b" d="M192 237L347 111"/>
<path stroke="#79c82b" d="M170 270L377 136"/>
<path stroke="#3ec82b" d="M138 292L395 171"/>
<path stroke="#2bc854" d="M100 299L399 209"/>
<path stroke="#2bc88f" d="M62 292L388 247"/>
<path stroke="#2bc6c8" d="M29 270L363 277"/>
<path stroke="#2b8bc8" d="M7 238L328 295"/>
<path stroke="#2b50c8" d="M0 200L290 299"/>
<path stroke="#412bc8" d="M7 162L252 288"/>
<path stroke="#7c2bc8" d="M29 129L222 263"/>
<path stroke="#b72bc8" d="M61 107L204 228"/>
<path stroke="#c82b9e" d="M99 100L200 190"/>
<path stroke="#c82b63" d="M137 107L211 152"/>
</g>
</svg></div>
<div id="strip">
<div style="position:absolute;left:0;top:0;width:20px;height:38px;background:linear-gradient(#60b2dc,#5aa9d3);"><div style="position:absolute;left:0;top:33px;width:20px;height:1px;background:#4f9cc8"></div><div style="position:absolute;left:0;top:35px;width:20px;height:1px;background:#4f9cc8"></div></div>
<div style="position:absolute;left:0;top:38px;width:20px;height:22px;background:#60687a;"></div>
<div style="position:absolute;left:0.5px;top:58.5px;width:3px;height:2px;background:#c9ccd3;"></div><div style="position:absolute;left:5.7px;top:57.6px;width:2.4px;height:3px;background:#d5d8de;"></div><div style="position:absolute;left:11px;top:56.6px;width:7px;height:4px;border:1.6px solid #f0f0f2;border-radius:0 3px 0 0;box-sizing:border-box;"></div>
<div style="position:absolute;left:0;top:60px;width:20px;height:25px;background:#d2d2d2;"></div>
<div style="position:absolute;left:0;top:85px;width:20px;height:23px;background:#d2d2d2;border-top:1px solid #b5b5b5;box-sizing:border-box;"></div>
<div style="position:absolute;left:0;top:108px;width:20px;height:6px;background:#d8d8d8;border-top:1px solid #b5b5b5;box-sizing:border-box;"></div>
<div style="position:absolute;left:0;top:114px;width:20px;height:24px;background:#d0d0d0;border-top:1px solid #b5b5b5;box-sizing:border-box;"></div>
<div style="position:absolute;left:0;top:138px;width:20px;height:21px;background:#bdbdbd;border-top:1px solid #aaa;box-sizing:border-box;"></div>
<div style="position:absolute;left:0;width:20px;top:159px;height:19px;background:#d6d6d6"></div><div style="position:absolute;left:0;width:20px;top:178px;height:19px;background:#c6c6c6"></div><div style="position:absolute;left:0;width:20px;top:197px;height:19px;background:#d6d6d6"></div><div style="position:absolute;left:0;width:20px;top:216px;height:19px;background:#c6c6c6"></div><div style="position:absolute;left:0;width:20px;top:235px;height:19px;background:#d6d6d6"></div><div style="position:absolute;left:0;width:20px;top:254px;height:19px;background:#c6c6c6"></div><div style="position:absolute;left:0;width:20px;top:273px;height:19px;background:#d6d6d6"></div><div style="position:absolute;left:0;width:20px;top:292px;height:19px;background:#c6c6c6"></div><div style="position:absolute;left:0;width:20px;top:311px;height:19px;background:#d6d6d6"></div><div style="position:absolute;left:0;width:20px;top:330px;height:19px;background:#c6c6c6"></div><div style="position:absolute;left:0;width:20px;top:349px;height:19px;background:#d6d6d6"></div><div style="position:absolute;left:0;width:20px;top:368px;height:19px;background:#c6c6c6"></div><div style="position:absolute;left:0;width:20px;top:387px;height:19px;background:#d6d6d6"></div>
<div style="position:absolute;left:-1px;top:143px;font-size:11.3px;line-height:14px;color:#000;white-space:pre;will-change:transform;">3.py</div>
<div style="position:absolute;left:0;top:91px;width:7px;height:9px;border:1px solid #777;box-sizing:border-box;"></div>
<div style="position:absolute;left:2px;top:91px;width:1px;height:9px;background:#888;"></div>
<div style="position:absolute;left:12px;top:85px;width:1px;height:22px;background:#b0b0b0;"></div>
<div style="position:absolute;left:19px;top:91px;width:1px;height:10px;background:#666;"></div>
</div>
<div id="edge"></div>
<div style="position:absolute;left:0;top:399px;width:187px;height:1px;background:#1c1c1c;"></div>
<div style="position:absolute;left:187px;top:399px;width:212px;height:1px;background:#a8a8a8;"></div>
<div id="ed">
<div id="hdr"></div>
<div class="btn" style="left:44px;background:#fff;"><svg width="30" height="30" style="position:absolute;left:0;top:0"><polygon points="12,9 12,21 22,15" fill="#009900"/></svg></div>
<div class="btn" style="left:83px;background:#a6aaae;"><div style="position:absolute;left:10px;top:10px;width:10px;height:10px;background:#14273a;"></div></div>
<div id="tab"><span>s253</span></div>
<div id="mod"></div>
<div id="dd"><span class="arr" style="left:8.1px;top:8.9px;">&#9660;</span></div>
<div id="mode"><span>Python</span><span class="arr" style="left:55.3px;top:5.1px;font-size:8.2px;">&#9660;</span></div>
<div id="tl"></div>
<div id="gut"><div class="bgl" style="top:64px;background:#587478"></div><div class="txt"><div class="ln">5</div><div class="ln">6</div><div class="ln">7</div><div class="ln">8</div><div class="ln hl">9</div><div class="ln">10</div><div class="ln">11</div><div class="ln">12</div><div class="ln">13</div><div class="ln">14</div><div class="ln">15</div><div class="ln">16</div><div class="ln">17</div><div class="ln">18</div><div class="ln">19</div><div class="ln">20</div><div class="ln">21</div><div class="ln">22</div><div class="ln">23</div></div></div>
<div id="code"><div class="bgl" style="top:64px;background:#eafffc"></div><div class="txt"><div class="cl"><span class="k">def</span> <span class="f4">setup</span>():</div><div class="cl">    <span class="f">size</span>(400, 400)</div><div class="cl">    <span class="f">colorMode</span>(<span class="c">HSB</span>)</div><div class="cl">&nbsp;</div><div class="cl hl"><span class="k">def</span> <span class="f4">draw</span>():</div><div class="cl">    <span class="f">fill</span>(200, 10)</div><div class="cl">    <span class="f">rect</span>(0, 0, <span class="v">width</span>, <span class="v">height</span>)</div><div class="cl">    r = 100  <span class="m"># radius</span></div><div class="cl">    x1, y1 = 100, 200</div><div class="cl">    x2, y2 = 300, 200</div><div class="cl">    <span class="g">for</span> i <span class="g">in</span> <span class="g">range</span>(16):</div><div class="cl">        <span class="f">stroke</span>(i * 16, 200, 200)</div><div class="cl">        a1 = i * <span class="c">TWO_PI</span> / 16 + <span class="v">frameCount</span> / <span class="f">map</span>(<span class="v">mouseX</span>, 0, <span class="v">width</span>, 1, 50)</div><div class="cl">        sx1 = x1 + <span class="f">cos</span>(a1) * r</div><div class="cl">        sy1 = y1 + <span class="f">sin</span>(a1) * r</div><div class="cl">        a2 = i * <span class="c">TWO_PI</span> / 16 + <span class="v">frameCount</span> / <span class="f">map</span>(<span class="v">mouseY</span>, 0, <span class="v">height</span>, 1, 50)</div><div class="cl">        sx2 = x2 + <span class="f">cos</span>(a2) * r</div><div class="cl">        sy2 = y2 + <span class="f">sin</span>(a2) * r</div><div class="cl">        <span class="f">line</span>(sx1, sy1, sx2, sy2)</div></div></div>
<div id="vs"></div><div id="vt"></div>
<div id="hs"></div><div id="ht"></div><div id="cr"></div>
<div id="bot"></div>
</div>
</body></html>
